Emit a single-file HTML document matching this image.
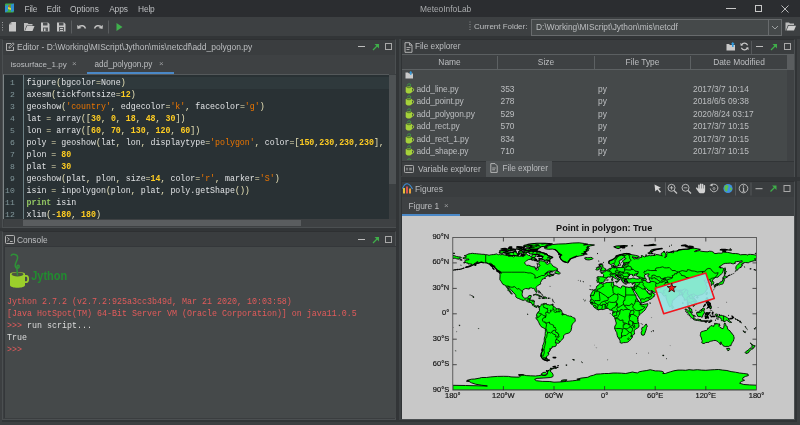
<!DOCTYPE html>
<html><head><meta charset="utf-8"><title>MeteoInfoLab</title>
<style>
*{box-sizing:border-box;margin:0;padding:0}
html,body{width:800px;height:425px;overflow:hidden;background:#3c3f41}
body{position:relative;font-family:"Liberation Sans",sans-serif;font-size:8.4px;color:#bcbec0;-webkit-font-smoothing:antialiased}
.a{position:absolute}
.t{position:absolute;white-space:pre;line-height:10px;height:10px}
.mono{font-family:"Liberation Mono",monospace}
.code{position:absolute;left:26.5px;white-space:pre;font-family:"Liberation Mono",monospace;font-size:8.28px;line-height:12px;height:12px;color:#e0e2e4}
.ln{position:absolute;left:0px;width:14.8px;text-align:right;font-family:"Liberation Mono",monospace;font-size:8.1px;line-height:12px;height:12px;color:#81969a}
.s{color:#ec7600}.n{color:#ffcd22;font-weight:bold}.p{color:#e8e2b7}.k{color:#93c763;font-weight:bold}
.con{position:absolute;left:7px;white-space:pre;font-family:"Liberation Mono",monospace;font-size:8.34px;line-height:12px;height:12px;color:#e25b5b}
.row{position:absolute;left:402px;width:385px;height:12.5px}
.row .t{top:1.2px}
#w{position:absolute;left:0;top:0;width:800px;height:425px;will-change:transform}
</style></head><body><div id="w">
<!-- menu bar -->
<div class="a" style="left:0;top:0;width:800px;height:17px;background:#2b2d30"></div>
<svg class="a" style="left:5px;top:3px" width="9" height="10" viewBox="0 0 9 10"><rect x="0" y="0.5" width="9" height="9" rx="1" fill="#3fae49"/><path d="M0 3 L3 1.5 L3 8 L0 9.5Z" fill="#2f8fd0"/><path d="M6 1.5 L9 0.5 L9 8 L6 9Z" fill="#2f8fd0"/><path d="M3 4 L6 5 L6 7 L3 6Z" fill="#e8d33c"/><circle cx="4.5" cy="3" r="1" fill="#d64a3a"/></svg>
<div class="t" style="left:24.6px;top:3.5px;letter-spacing:-0.25px">File</div>
<div class="t" style="left:46.6px;top:3.5px;letter-spacing:-0.15px">Edit</div>
<div class="t" style="left:70px;top:3.5px">Options</div>
<div class="t" style="left:109.2px;top:3.5px;letter-spacing:-0.15px">Apps</div>
<div class="t" style="left:138px;top:3.5px;letter-spacing:-0.15px">Help</div>
<div class="t" style="left:420px;top:3.5px;color:#a9abad">MeteoInfoLab</div>
<!-- window controls -->
<div class="a" style="left:725.5px;top:7.7px;width:10px;height:1px;background:#c8c8c8"></div>
<div class="a" style="left:754.5px;top:5px;width:7px;height:7px;border:1px solid #c8c8c8"></div>
<svg class="a" style="left:781px;top:4.5px" width="8" height="8" viewBox="0 0 8 8"><path d="M0.5 0.5L7.5 7.5M7.5 0.5L0.5 7.5" stroke="#c8c8c8" stroke-width="0.9"/></svg>
<!-- toolbar -->
<div class="a" style="left:0;top:17px;width:800px;height:19px;background:#3d4042"></div>
<div class="a" style="left:0;top:35.5px;width:800px;height:3.5px;background:#323537"></div>
<svg class="a" style="left:0;top:17px" width="130" height="19" viewBox="0 0 130 19">
 <g fill="#9a9c9e"><rect x="2" y="5" width="1" height="1"/><rect x="2" y="7.5" width="1" height="1"/><rect x="2" y="10" width="1" height="1"/><rect x="2" y="12.5" width="1" height="1"/></g>
 <path d="M9 14.5V7.5L11.5 5H16V14.5Z" fill="#c6c6c6"/><path d="M9 7.5H11.5V5Z" fill="#8e8e8e"/>
 <path d="M24 14V6H27.5L28.5 7H32.5V8.5H26.5L24.5 14Z" fill="#bdbdbd"/><path d="M25 14L27 9H34.5L32.5 14Z" fill="#c9c9c9"/>
 <path d="M41 5.5H48L49.5 7V14.5H41Z" fill="#c4c4c4"/><rect x="43" y="5.5" width="4.5" height="3" fill="#4a4d4f"/><rect x="43" y="10.5" width="5" height="4" fill="#55585a"/><rect x="44" y="11.5" width="1.5" height="2.5" fill="#c4c4c4"/>
 <path d="M57 5.5H64L65.5 7V14.5H57Z" fill="#c4c4c4"/><rect x="59" y="5.5" width="4.5" height="3" fill="#4a4d4f"/><rect x="59" y="10" width="5" height="4.5" fill="#55585a"/><rect x="60" y="11" width="3" height="1" fill="#c4c4c4"/><rect x="60" y="13" width="3" height="1" fill="#c4c4c4"/>
 <rect x="71" y="3.5" width="1" height="13" fill="#5a5d5f"/>
 <path d="M85.5 11.5C84.5 8.5 81.5 8 79 9.5" stroke="#c0c0c0" stroke-width="1.5" fill="none"/><path d="M77 8L77.5 12L81.5 11Z" fill="#c0c0c0"/>
 <path d="M94.5 11.5C95.5 8.5 98.5 8 101 9.5" stroke="#c0c0c0" stroke-width="1.5" fill="none"/><path d="M103 8L102.5 12L98.500 11Z" fill="#c0c0c0"/>
 <rect x="108" y="3.500" width="1" height="13" fill="#5a5d5f"/>
 <path d="M116.500 6L122.500 10L116.500 14Z" fill="#3fb04c"/>
</svg>
<!-- current folder -->
<svg class="a" style="left:469px;top:21px" width="2" height="12"><g fill="#8e9092"><rect x="0.500" y="0.500" width="1" height="1"/><rect x="0.500" y="3" width="1" height="1"/><rect x="0.500" y="5.500" width="1" height="1"/><rect x="0.500" y="8" width="1" height="1"/></g></svg>
<div class="t" style="left:474px;top:21.500px;font-size:8px;letter-spacing:-0.03px">Current Folder:</div>
<div class="a" style="left:531px;top:18.500px;width:250.500px;height:17px;background:#45494a;border:1px solid #686b6d"></div>
<div class="a" style="left:767.500px;top:19.500px;width:1px;height:15px;background:#686b6d"></div>
<svg class="a" style="left:770.500px;top:24.500px" width="8" height="5" viewBox="0 0 8 5"><path d="M1 1L4 4L7 1" stroke="#a8abad" stroke-width="0.9" fill="none"/></svg>
<div class="t" style="left:536px;top:22px">D:\Working\MIScript\Jython\mis\netcdf</div>
<svg class="a" style="left:784.500px;top:21px" width="12" height="11" viewBox="0 0 12 11"><path d="M0.500 9.500V1.500H4L5 2.500H9V4H3L0.900 9.500Z" fill="#bdbdbd"/><path d="M1.500 9.500L3.500 4.800H11L9 9.500Z" fill="#cfcfcf"/></svg>
<!-- vertical divider shading -->
<div class="a" style="left:396px;top:39px;width:2.500px;height:381px;background:#323537"></div>
<!-- ===== EDITOR PANEL ===== -->
<div class="a" style="left:2px;top:39px;width:394px;height:188.500px;background:#3a3d3f;border:1px solid #4b4f51;border-top-color:#2e3032"></div>
<div class="a" style="left:3px;top:55px;width:392px;height:19px;background:#3e4143"></div>
<svg class="a" style="left:4.500px;top:42px" width="10" height="10" viewBox="0 0 10 10"><path d="M6 1.500H1.500V8.500H8.500V5" stroke="#c0c0c0" stroke-width="0.9" fill="none"/><path d="M4 6.200L4.300 4.500L8 0.800L9.200 2L5.500 5.700Z" fill="none" stroke="#c0c0c0" stroke-width="0.800"/></svg>
<div class="t" style="left:17px;top:42px;font-size:8.47px">Editor - D:\Working\MIScript\Jython\mis\netcdf\add_polygon.py</div>
<div class="a" style="left:357.500px;top:46.200px;width:7px;height:1px;background:#bdbdbd"></div>
<svg class="a" style="left:371.500px;top:43px" width="8" height="8" viewBox="0 0 8 8"><path d="M1 7L6 2" stroke="#3fae49" stroke-width="1.300"/><path d="M2.500 1H7V5.500Z" fill="#3fae49"/></svg>
<div class="a" style="left:385px;top:43px;width:7px;height:7px;border:1px solid #a8a8a8"></div>
<div class="t" style="left:10.6px;top:59.5px;font-size:8px">isosurface_1.py</div>
<div class="t" style="left:72px;top:59px;font-size:8px;color:#9a9c9e">×</div>
<div class="t" style="left:94.5px;top:59.5px;font-size:8.2px">add_polygon.py</div>
<div class="t" style="left:159px;top:59px;font-size:8px;color:#9a9c9e">×</div>
<div class="a" style="left:87px;top:72px;width:87px;height:2px;background:#4a88c7"></div>
<!-- code area -->
<div class="a" style="left:2.8px;top:74px;width:386.2px;height:145px;background:#293134;border-left:1px solid #7d8486;border-top:1px solid #55595b"></div>
<div class="a" style="left:23px;top:76.500px;width:366px;height:12px;background:#2f393c"></div>
<div class="a" style="left:22.500px;top:75px;width:1px;height:144px;background:#6c7f83"></div>
<div class="a" style="left:389px;top:74px;width:6.5px;height:145px;background:#3b3f41"></div>
<div class="a" style="left:389px;top:74.5px;width:6.5px;height:109px;background:#4e5254"></div>
<div class="a" style="left:3.500px;top:219px;width:392px;height:7.500px;background:#3e4143"></div>
<div class="a" style="left:22.500px;top:219.500px;width:278px;height:6.500px;background:#5a5d5f"></div>
<div class="ln" style="top:76.5px">1</div><div class="code" style="top:76.5px">figure<span class="p">(</span>bgcolor<span class="p">=</span>None<span class="p">)</span></div>
<div class="ln" style="top:88.5px">2</div><div class="code" style="top:88.5px">axesm<span class="p">(</span>tickfontsize<span class="p">=</span><span class="n">12</span><span class="p">)</span></div>
<div class="ln" style="top:100.5px">3</div><div class="code" style="top:100.5px">geoshow<span class="p">(</span><span class="s">'country'</span><span class="p">,</span> edgecolor<span class="p">=</span><span class="s">'k'</span><span class="p">,</span> facecolor<span class="p">=</span><span class="s">'g'</span><span class="p">)</span></div>
<div class="ln" style="top:112.5px">4</div><div class="code" style="top:112.5px">lat <span class="p">=</span> array<span class="p">(</span><span class="p">[</span><span class="n">30</span><span class="p">,</span> <span class="n">0</span><span class="p">,</span> <span class="n">18</span><span class="p">,</span> <span class="n">48</span><span class="p">,</span> <span class="n">30</span><span class="p">]</span><span class="p">)</span></div>
<div class="ln" style="top:124.5px">5</div><div class="code" style="top:124.5px">lon <span class="p">=</span> array<span class="p">(</span><span class="p">[</span><span class="n">60</span><span class="p">,</span> <span class="n">70</span><span class="p">,</span> <span class="n">130</span><span class="p">,</span> <span class="n">120</span><span class="p">,</span> <span class="n">60</span><span class="p">]</span><span class="p">)</span></div>
<div class="ln" style="top:136.5px">6</div><div class="code" style="top:136.5px">poly <span class="p">=</span> geoshow<span class="p">(</span>lat<span class="p">,</span> lon<span class="p">,</span> displaytype<span class="p">=</span><span class="s">'polygon'</span><span class="p">,</span> color<span class="p">=</span><span class="p">[</span><span class="n">150</span><span class="p">,</span><span class="n">230</span><span class="p">,</span><span class="n">230</span><span class="p">,</span><span class="n">230</span><span class="p">]</span><span class="p">,</span></div>
<div class="ln" style="top:148.5px">7</div><div class="code" style="top:148.5px">plon <span class="p">=</span> <span class="n">80</span></div>
<div class="ln" style="top:160.5px">8</div><div class="code" style="top:160.5px">plat <span class="p">=</span> <span class="n">30</span></div>
<div class="ln" style="top:172.5px">9</div><div class="code" style="top:172.5px">geoshow<span class="p">(</span>plat<span class="p">,</span> plon<span class="p">,</span> size<span class="p">=</span><span class="n">14</span><span class="p">,</span> color<span class="p">=</span><span class="s">'r'</span><span class="p">,</span> marker<span class="p">=</span><span class="s">'S'</span><span class="p">)</span></div>
<div class="ln" style="top:184.5px">10</div><div class="code" style="top:184.5px">isin <span class="p">=</span> inpolygon<span class="p">(</span>plon<span class="p">,</span> plat<span class="p">,</span> poly.getShape<span class="p">(</span><span class="p">)</span><span class="p">)</span></div>
<div class="ln" style="top:196.5px">11</div><div class="code" style="top:196.5px"><span class="k">print</span> isin</div>
<div class="ln" style="top:208.5px">12</div><div class="code" style="top:208.5px">xlim<span class="p">(</span><span class="p">-</span><span class="n">180</span><span class="p">,</span> <span class="n">180</span><span class="p">)</span></div>
<!-- gap between editor and console -->
<div class="a" style="left:0;top:227.500px;width:398px;height:3.500px;background:#323537"></div>
<!-- ===== CONSOLE PANEL ===== -->
<div class="a" style="left:2px;top:231px;width:394px;height:188.500px;background:#3a3d3f;border:1px solid #4b4f51;border-top-color:#2e3032"></div>
<svg class="a" style="left:4.500px;top:234.500px" width="10" height="9" viewBox="0 0 10 9"><rect x="0.500" y="0.500" width="9" height="8" rx="1" fill="none" stroke="#c0c0c0" stroke-width="0.900"/><path d="M2.300 2.500L4.300 4.300L2.300 6.100" stroke="#c0c0c0" stroke-width="0.900" fill="none"/><path d="M5 6.500H7.700" stroke="#c0c0c0" stroke-width="0.900"/></svg>
<div class="t" style="left:17px;top:234.500px">Console</div>
<div class="a" style="left:357.500px;top:238.700px;width:7px;height:1px;background:#bdbdbd"></div>
<svg class="a" style="left:371.500px;top:235.500px" width="8" height="8" viewBox="0 0 8 8"><path d="M1 7L6 2" stroke="#3fae49" stroke-width="1.300"/><path d="M2.500 1H7V5.500Z" fill="#3fae49"/></svg>
<div class="a" style="left:385px;top:235.500px;width:7px;height:7px;border:1px solid #a8a8a8"></div>
<div class="a" style="left:3.5px;top:246px;width:392px;height:172px;background:#45494a;border-left:1px solid #34373a;border-top:1px solid #34373a"></div>
<!-- jython logo -->
<svg class="a" style="left:8px;top:251px" width="62" height="40" viewBox="0 0 62 40">
 <path d="M3.2 4.4C4.5 2.6 9.8 2.9 9.6 6.6C9.4 10 6.8 12 7.2 15.2C7.6 18 11.4 17.6 11.2 15.3C11 13.600 8.800 13.900 8.800 16.500C8.800 19 9.500 21 9.500 24" stroke="#2f9038" stroke-width="1.5" fill="none" stroke-linecap="round"/>
 <path d="M2 22.8C2 20.300 17 20.300 17 22.800V34.300C17 37.600 2 37.600 2 34.300Z" fill="#9bcf2b"/>
 <ellipse cx="9.500" cy="23.300" rx="6" ry="2.100" fill="#4c5342"/>
 <path d="M9.200 20.500C9.200 22 9.400 23 9.500 24.500" stroke="#2f9038" stroke-width="1.400" fill="none"/>
 <path d="M17 24.800H18.300C20.800 24.800 20.800 31.200 18.300 31.200H17" stroke="#9bcf2b" stroke-width="1.700" fill="none"/>
 <text x="23.200" y="28.700" font-family="Liberation Sans, sans-serif" font-weight="bold" font-size="13" fill="#228c30" textLength="36" lengthAdjust="spacingAndGlyphs">Jython</text>
</svg>
<div class="con" style="top:295.500px">Jython 2.7.2 (v2.7.2:925a3cc3b49d, Mar 21 2020, 10:03:58)</div>
<div class="con" style="top:307.500px">[Java HotSpot(TM) 64-Bit Server VM (Oracle Corporation)] on java11.0.5</div>
<div class="con" style="top:319.500px">&gt;&gt;&gt; <span style="color:#dcdcdc">run script...</span></div>
<div class="con" style="top:331.500px;color:#dcdcdc">True</div>
<div class="con" style="top:343.500px">&gt;&gt;&gt;</div>
<!-- ===== FILE EXPLORER PANEL ===== -->
<div class="a" style="left:400.500px;top:39px;width:394px;height:138px;background:#3a3d3f;border:1px solid #4b4f51;border-top-color:#2e3032;border-left-color:#303335"></div>
<svg class="a" style="left:403.500px;top:41.500px" width="9" height="11" viewBox="0 0 9 11"><path d="M1 0.700H5.500L8 3.200V10.300H1Z" fill="none" stroke="#c0c0c0" stroke-width="0.900"/><path d="M5.500 0.700V3.200H8" fill="none" stroke="#c0c0c0" stroke-width="0.800"/><path d="M2.500 5.500H6.500M2.500 7.500H5.500" stroke="#c0c0c0" stroke-width="0.800"/></svg>
<div class="t" style="left:415px;top:42px;font-size:8.250px">File explorer</div>
<!-- title icons -->
<svg class="a" style="left:725.500px;top:41.500px" width="10" height="9" viewBox="0 0 10 9"><path d="M0.500 8.500V2H3L4 3H9V8.500Z" fill="#c9c9c9"/><path d="M6.800 0L4.800 2.300H6V5H7.600V2.300H8.800Z" fill="#2f9be0"/></svg>
<svg class="a" style="left:739.500px;top:42px" width="9" height="9" viewBox="0 0 9 9"><path d="M7.600 3.300A3.300 3.300 0 0 0 1.600 2.800" stroke="#c9c9c9" stroke-width="1.200" fill="none"/><path d="M1.400 5.700A3.300 3.300 0 0 0 7.400 6.200" stroke="#c9c9c9" stroke-width="1.200" fill="none"/><path d="M0.300 1L0.800 4L3.500 3Z" fill="#c9c9c9"/><path d="M8.700 8L8.200 5L5.500 6Z" fill="#c9c9c9"/></svg>
<div class="a" style="left:751px;top:40.500px;width:1px;height:13px;background:#55585a"></div>
<div class="a" style="left:755.500px;top:46.200px;width:7px;height:1px;background:#bdbdbd"></div>
<svg class="a" style="left:769.500px;top:43px" width="8" height="8" viewBox="0 0 8 8"><path d="M1 7L6 2" stroke="#3fae49" stroke-width="1.300"/><path d="M2.500 1H7V5.500Z" fill="#3fae49"/></svg>
<div class="a" style="left:783.500px;top:43px;width:7px;height:7px;border:1px solid #a8a8a8"></div>
<!-- table -->
<div class="a" style="left:401.500px;top:54px;width:392.500px;height:106.500px;background:#45494a;border-top:1px solid #5b5f61"></div>
<div class="a" style="left:401.500px;top:55px;width:385.500px;height:14px;background:#3e4143"></div>
<div class="a" style="left:401.500px;top:69px;width:385.500px;height:1px;background:#5d6163"></div>
<div class="a" style="left:497px;top:56px;width:1px;height:12.500px;background:#5d6163"></div>
<div class="a" style="left:594px;top:56px;width:1px;height:12.500px;background:#5d6163"></div>
<div class="a" style="left:690px;top:56px;width:1px;height:12.500px;background:#5d6163"></div>
<div class="a" style="left:787px;top:55px;width:7px;height:105.500px;background:#3f4244"></div>
<div class="a" style="left:787px;top:54.500px;width:7px;height:15px;background:#5a5d5f"></div>
<div class="t" style="left:401.500px;width:96px;text-align:center;top:57px">Name</div>
<div class="t" style="left:498px;width:96px;text-align:center;top:57px">Size</div>
<div class="t" style="left:595px;width:95px;text-align:center;top:57px">File Type</div>
<div class="t" style="left:691px;width:96px;text-align:center;top:57px">Date Modified</div>
<svg class="a" style="left:405px;top:71px" width="9" height="8" viewBox="0 0 9 8"><path d="M0.500 7.500V1.500H3L4 2.500H8V7.500Z" fill="#c9c9c9"/><path d="M5.800 0L4.200 1.800H5.200V4H6.400V1.800H7.400Z" fill="#2f9be0"/></svg>
<div class="row" style="top:82.70px"><svg class="a" style="left:2.5px;top:0.2px" width="10" height="11" viewBox="0 0 10 11"><path d="M2.3 2.400C2.500 0.400 6 0.400 5.800 2C5.600 3.200 3.600 3 4 4.400" stroke="#3c9c46" stroke-width="1" fill="none"/><path d="M0.700 4.200C0.700 3.300 7 3.300 7 4.200V8.300C7 9.700 6 10.400 4.800 10.400H2.900C1.700 10.400 0.700 9.700 0.700 8.300Z" fill="#a5d13a"/><ellipse cx="3.850" cy="4.500" rx="2.500" ry="0.700" fill="#5f8a28"/><path d="M7 5.400H7.700C9 5.400 9 8.200 7.700 8.200H7" stroke="#a5d13a" stroke-width="1" fill="none"/></svg><div class="t" style="left:14.5px;letter-spacing:-0.06px">add_line.py</div><div class="t" style="left:98.5px">353</div><div class="t" style="left:196px">py</div><div class="t" style="left:291px">2017/3/7 10:14</div></div>
<div class="row" style="top:95.15px"><svg class="a" style="left:2.5px;top:0.2px" width="10" height="11" viewBox="0 0 10 11"><path d="M2.3 2.400C2.500 0.400 6 0.400 5.800 2C5.600 3.200 3.600 3 4 4.400" stroke="#3c9c46" stroke-width="1" fill="none"/><path d="M0.700 4.200C0.700 3.300 7 3.300 7 4.200V8.300C7 9.700 6 10.400 4.800 10.400H2.900C1.700 10.400 0.700 9.700 0.700 8.300Z" fill="#a5d13a"/><ellipse cx="3.850" cy="4.500" rx="2.500" ry="0.700" fill="#5f8a28"/><path d="M7 5.400H7.700C9 5.400 9 8.200 7.700 8.200H7" stroke="#a5d13a" stroke-width="1" fill="none"/></svg><div class="t" style="left:14.5px;letter-spacing:-0.06px">add_point.py</div><div class="t" style="left:98.5px">278</div><div class="t" style="left:196px">py</div><div class="t" style="left:291px">2018/6/5 09:38</div></div>
<div class="row" style="top:107.60px"><svg class="a" style="left:2.5px;top:0.2px" width="10" height="11" viewBox="0 0 10 11"><path d="M2.3 2.400C2.500 0.400 6 0.400 5.800 2C5.600 3.200 3.600 3 4 4.400" stroke="#3c9c46" stroke-width="1" fill="none"/><path d="M0.700 4.200C0.700 3.300 7 3.300 7 4.200V8.300C7 9.700 6 10.400 4.800 10.400H2.900C1.700 10.400 0.700 9.700 0.700 8.300Z" fill="#a5d13a"/><ellipse cx="3.850" cy="4.500" rx="2.500" ry="0.700" fill="#5f8a28"/><path d="M7 5.400H7.700C9 5.400 9 8.200 7.700 8.200H7" stroke="#a5d13a" stroke-width="1" fill="none"/></svg><div class="t" style="left:14.5px;letter-spacing:-0.06px">add_polygon.py</div><div class="t" style="left:98.5px">529</div><div class="t" style="left:196px">py</div><div class="t" style="left:291px">2020/8/24 03:17</div></div>
<div class="row" style="top:120.05px"><svg class="a" style="left:2.5px;top:0.2px" width="10" height="11" viewBox="0 0 10 11"><path d="M2.3 2.400C2.500 0.400 6 0.400 5.800 2C5.600 3.200 3.600 3 4 4.400" stroke="#3c9c46" stroke-width="1" fill="none"/><path d="M0.700 4.200C0.700 3.300 7 3.300 7 4.200V8.300C7 9.700 6 10.400 4.800 10.400H2.900C1.700 10.400 0.700 9.700 0.700 8.300Z" fill="#a5d13a"/><ellipse cx="3.850" cy="4.500" rx="2.500" ry="0.700" fill="#5f8a28"/><path d="M7 5.400H7.700C9 5.400 9 8.200 7.700 8.200H7" stroke="#a5d13a" stroke-width="1" fill="none"/></svg><div class="t" style="left:14.5px;letter-spacing:-0.06px">add_rect.py</div><div class="t" style="left:98.5px">570</div><div class="t" style="left:196px">py</div><div class="t" style="left:291px">2017/3/7 10:15</div></div>
<div class="row" style="top:132.50px"><svg class="a" style="left:2.5px;top:0.2px" width="10" height="11" viewBox="0 0 10 11"><path d="M2.3 2.400C2.500 0.400 6 0.400 5.800 2C5.600 3.200 3.600 3 4 4.400" stroke="#3c9c46" stroke-width="1" fill="none"/><path d="M0.700 4.200C0.700 3.300 7 3.300 7 4.200V8.300C7 9.700 6 10.400 4.800 10.400H2.900C1.700 10.400 0.700 9.700 0.700 8.300Z" fill="#a5d13a"/><ellipse cx="3.850" cy="4.500" rx="2.500" ry="0.700" fill="#5f8a28"/><path d="M7 5.400H7.700C9 5.400 9 8.200 7.700 8.200H7" stroke="#a5d13a" stroke-width="1" fill="none"/></svg><div class="t" style="left:14.5px;letter-spacing:-0.06px">add_rect_1.py</div><div class="t" style="left:98.5px">834</div><div class="t" style="left:196px">py</div><div class="t" style="left:291px">2017/3/7 10:15</div></div>
<div class="row" style="top:144.95px"><svg class="a" style="left:2.5px;top:0.2px" width="10" height="11" viewBox="0 0 10 11"><path d="M2.3 2.400C2.500 0.400 6 0.400 5.800 2C5.600 3.200 3.600 3 4 4.400" stroke="#3c9c46" stroke-width="1" fill="none"/><path d="M0.700 4.200C0.700 3.300 7 3.300 7 4.200V8.300C7 9.700 6 10.400 4.800 10.400H2.900C1.700 10.400 0.700 9.700 0.700 8.300Z" fill="#a5d13a"/><ellipse cx="3.850" cy="4.500" rx="2.500" ry="0.700" fill="#5f8a28"/><path d="M7 5.400H7.700C9 5.400 9 8.200 7.700 8.200H7" stroke="#a5d13a" stroke-width="1" fill="none"/></svg><div class="t" style="left:14.5px;letter-spacing:-0.06px">add_shape.py</div><div class="t" style="left:98.5px">710</div><div class="t" style="left:196px">py</div><div class="t" style="left:291px">2017/3/7 10:15</div></div>
<div class="a" style="left:402px;top:157.40px;width:14px;height:3.10px;overflow:hidden"><svg class="a" style="left:2.5px;top:0.2px" width="10" height="11" viewBox="0 0 10 11"><path d="M2.3 2.400C2.500 0.400 6 0.400 5.800 2C5.600 3.200 3.600 3 4 4.400" stroke="#3c9c46" stroke-width="1" fill="none"/><path d="M0.700 4.200C0.700 3.300 7 3.300 7 4.200V8.300C7 9.700 6 10.400 4.800 10.400H2.900C1.700 10.400 0.700 9.700 0.700 8.300Z" fill="#a5d13a"/><ellipse cx="3.850" cy="4.500" rx="2.500" ry="0.700" fill="#5f8a28"/><path d="M7 5.400H7.700C9 5.400 9 8.200 7.700 8.200H7" stroke="#a5d13a" stroke-width="1" fill="none"/></svg></div>
<!-- bottom tabs of explorer -->
<div class="a" style="left:401.500px;top:160.500px;width:392.500px;height:16px;background:#3c3f41;border-top:1px solid #323537"></div>
<div class="a" style="left:486px;top:161px;width:66px;height:15.500px;background:#4e5254"></div>
<svg class="a" style="left:404px;top:164.500px" width="10" height="8" viewBox="0 0 10 8"><rect x="0.500" y="0.500" width="9" height="7" rx="0.800" fill="none" stroke="#b4b4b4" stroke-width="0.900"/><path d="M2.200 3.300H3.800M2.200 4.800H3.800M5.200 3.300H7.800M5.200 4.800H7.800" stroke="#b4b4b4" stroke-width="0.800"/></svg>
<div class="t" style="left:418px;top:164px">Variable explorer</div>
<svg class="a" style="left:489.500px;top:163px" width="8" height="10" viewBox="0 0 8 10"><path d="M0.800 0.600H5L7.200 2.800V9.400H0.800Z" fill="none" stroke="#c0c0c0" stroke-width="0.900"/><path d="M2.200 5H5.800M2.200 6.800H5" stroke="#c0c0c0" stroke-width="0.800"/></svg>
<div class="t" style="left:502.500px;top:164px;font-size:8.250px">File explorer</div>
<!-- gap -->
<div class="a" style="left:398.500px;top:177px;width:401.500px;height:3.500px;background:#323537"></div>
<!-- ===== FIGURES PANEL ===== -->
<div class="a" style="left:400.500px;top:180.500px;width:394px;height:239px;background:#3a3d3f;border:1px solid #4b4f51;border-top-color:#2e3032;border-left-color:#303335"></div>
<div class="a" style="left:401.500px;top:197px;width:392.500px;height:19px;background:#3e4143"></div>
<svg class="a" style="left:402px;top:183px" width="11" height="11" viewBox="0 0 11 11"><rect x="1" y="5" width="2" height="5.500" fill="#e8c03a"/><rect x="4" y="3.500" width="2" height="7" fill="#d9534f"/><rect x="7" y="5.500" width="2" height="5" fill="#e8a03a"/><path d="M0.500 5.500C3 -1 7 -1 10.500 6" stroke="#3f8fd8" stroke-width="1.100" fill="none"/></svg>
<div class="t" style="left:415px;top:184px">Figures</div>
<div class="t" style="left:408.500px;top:201px">Figure 1</div>
<div class="t" style="left:444px;top:200.500px;font-size:8px;color:#9a9c9e">×</div>
<div class="a" style="left:401.500px;top:214px;width:58px;height:2px;background:#4a88c7"></div>
<!-- figures toolbar icons -->
<svg class="a" style="left:650px;top:181px" width="145" height="16" viewBox="0 0 145 16">
 <path d="M4.500 3.500L5.300 10.500L7.200 8.600L9.800 11.800L11 10.800L8.400 7.700L10.900 6.800Z" fill="#d6d6d6"/>
 <rect x="15" y="1.500" width="1" height="13" fill="#55585a"/>
 <g fill="none" stroke="#c4c4c4" stroke-width="0.900"><circle cx="21.500" cy="6.800" r="3.500"/><path d="M24 9.500L27 12.500" stroke-width="1.200"/><path d="M19.700 6.800H23.300M21.500 5V8.600" stroke-width="0.800"/>
 <circle cx="35.500" cy="6.800" r="3.500"/><path d="M38 9.500L41 12.500" stroke-width="1.200"/><path d="M33.700 6.800H37.300" stroke-width="0.800"/></g>
 <g fill="#d2d2d2"><rect x="48.2" y="3.4" width="1.5" height="6" rx="0.7"/><rect x="50" y="2.4" width="1.5" height="6.500" rx="0.7"/><rect x="51.800" y="2.800" width="1.500" height="6" rx="0.700"/><rect x="53.600" y="4" width="1.500" height="5" rx="0.700"/><path d="M48.200 7.500H55.100V10C55.100 11.500 54 12.300 52.800 12.300H50.800C49.800 12.300 49 11.800 48.400 10.800L46 7.400C45.600 6.600 46.600 6 47.200 6.700L48.200 8Z"/></g>
 <g fill="none" stroke="#c4c4c4" stroke-width="0.900"><path d="M62 3.800A3.800 3.800 0 1 1 60.300 7.500"/><circle cx="64" cy="7.500" r="1" stroke-width="0.700"/></g><path d="M59.500 4.300L62.500 2.200V5.500Z" fill="#c4c4c4"/>
 <circle cx="78" cy="7.500" r="4.600" fill="#3f8fe0"/><path d="M75 4.500C76.500 3.500 78 4 78.500 5C79 6.500 77 7 77.500 8.500C78 10 76.500 11 75.500 10C74.500 9 74 6 75 4.500Z" fill="#5fc04a"/><path d="M80 6.500C81.500 6 82.300 7.500 81.500 9C81 10 80 9.500 80 8.500Z" fill="#5fc04a"/>
 <rect x="85" y="1.500" width="1" height="13" fill="#55585a"/>
 <circle cx="93.500" cy="7.500" r="4.300" fill="none" stroke="#c4c4c4" stroke-width="0.900"/><path d="M93.600 6.900V10.200M92.600 10.300H94.600M92.700 6.900H93.600" stroke="#c4c4c4" stroke-width="1" fill="none"/><circle cx="93.500" cy="5" r="0.700" fill="#c4c4c4"/>
 <rect x="100.500" y="1.500" width="1" height="13" fill="#55585a"/>
 <rect x="105.500" y="7.200" width="7" height="1" fill="#bdbdbd"/>
 <path d="M120.500 10.500L125.500 5.500" stroke="#3fae49" stroke-width="1.300"/><path d="M122 4.500H126.500V9Z" fill="#3fae49"/>
 <rect x="134" y="4.500" width="6" height="6" fill="none" stroke="#a8a8a8" stroke-width="1"/>
</svg>
<!-- figure canvas -->
<div class="a" style="left:401.500px;top:216px;width:392.500px;height:203px;background:#c8c8c8"></div>
<!-- shadow-r -->
<div class="a" style="left:794.5px;top:39px;width:2px;height:382px;background:#313436"></div>
<div class="a" style="left:2px;top:419.5px;width:794.5px;height:2px;background:#313436"></div>
<div class="a" style="left:398.5px;top:39px;width:2px;height:381px;background:#3e4244"></div>
<svg class="a" style="left:401.0px;top:216.0px" width="393.0" height="203.0" viewBox="0 0 393.0 203.0">
<defs><clipPath id="ax"><rect x="52.10" y="21.80" width="303.05" height="151.85"/></clipPath></defs>
<g clip-path="url(#ax)" stroke-linejoin="round"><g transform="translate(0,-0.1)">
<path d="M61.8 42.1L63.4 41.7L64.9 41.4L65.5 40.9L64.0 40.1L63.2 39.8L64.9 39.4L66.1 38.8L67.0 38.2L69.5 37.7L71.5 37.4L73.3 37.7L75.4 37.8L77.1 38.0L78.8 38.1L80.9 38.4L83.0 38.4L84.7 38.8L86.4 38.9L88.1 39.4L89.3 39.0L90.6 38.8L92.3 38.7L94.0 38.4L95.7 38.0L96.7 38.6L97.8 39.0L98.4 38.4L99.5 38.9L101.1 38.6L103.3 39.0L104.9 39.4L106.6 39.6L107.0 40.2L109.2 40.4L110.8 40.2L112.1 40.7L112.5 41.2L113.4 40.6L113.0 40.0L114.6 39.7L116.7 40.2L118.4 40.4L120.5 40.3L121.8 40.7L122.7 40.7L123.1 39.7L124.6 38.9L122.7 38.3L122.4 37.4L123.9 36.8L124.8 37.4L126.0 38.2L126.4 38.9L127.5 39.5L129.0 39.6L129.6 40.6L130.7 40.5L131.3 39.0L132.4 38.5L134.2 38.6L135.1 39.1L134.9 40.0L134.5 41.0L133.2 41.5L132.4 41.6L130.9 41.4L131.3 42.2L130.0 42.5L129.4 43.4L127.7 43.6L126.9 44.1L125.6 44.8L124.6 45.7L123.7 46.7L123.9 47.6L124.2 48.0L125.4 49.1L125.8 49.5L127.3 49.3L129.0 49.9L130.2 50.4L131.9 50.9L134.0 51.0L134.3 52.0L134.3 52.9L135.1 53.5L135.7 54.3L136.6 54.3L137.2 53.7L137.2 52.9L136.8 51.9L136.4 51.3L137.8 50.9L138.9 50.1L138.9 49.1L138.3 48.4L137.4 48.0L138.3 47.1L137.8 46.1L137.8 44.9L139.5 44.9L141.2 45.0L142.9 45.5L144.2 46.1L145.0 46.3L144.9 47.1L145.3 47.9L146.3 48.4L147.5 48.1L148.1 47.3L149.1 46.6L149.6 47.4L150.7 48.4L151.5 49.2L151.8 50.1L152.8 50.8L154.3 51.3L155.3 52.0L156.4 52.6L156.6 53.4L156.0 54.1L154.3 54.4L153.0 55.2L151.3 55.2L149.6 55.2L147.5 55.2L146.9 55.9L145.6 56.5L144.6 57.4L143.7 58.0L144.6 57.8L145.8 56.8L147.5 56.2L149.2 56.2L149.4 56.7L148.1 57.0L148.8 57.8L149.0 58.5L149.9 58.9L150.9 59.1L152.2 59.1L152.2 59.5L150.5 59.9L149.2 60.5L148.2 60.9L147.8 60.3L148.8 59.6L149.2 59.2L148.1 59.5L147.1 59.6L146.0 60.2L144.6 60.8L144.0 61.5L144.1 62.2L144.6 62.4L143.9 62.5L142.5 62.9L141.2 63.3L141.2 64.2L140.4 64.8L140.1 65.6L139.5 66.4L139.5 67.3L139.9 67.9L138.9 68.4L137.8 69.1L136.8 69.7L135.5 70.7L135.0 71.9L135.6 73.6L136.1 75.1L135.9 76.4L135.1 76.4L134.6 75.6L133.9 74.3L133.8 73.2L132.9 72.4L131.7 72.6L130.7 72.0L129.4 72.1L128.1 72.2L128.4 73.1L127.3 73.1L126.0 72.7L124.3 72.7L123.3 73.2L122.1 73.9L121.5 74.9L121.6 75.9L121.2 77.5L121.1 78.9L121.6 80.3L122.4 81.4L123.1 81.9L123.9 82.4L125.2 82.1L126.2 82.0L127.1 81.4L127.4 80.2L128.1 79.7L129.0 79.6L130.2 79.6L130.4 80.2L129.8 81.3L129.6 82.4L129.1 83.0L129.1 83.8L128.6 84.3L129.8 84.4L131.1 84.3L132.4 84.4L133.4 85.1L133.2 86.4L133.1 87.6L133.0 88.5L133.6 89.3L134.3 90.0L135.1 90.3L136.1 90.0L137.0 89.7L138.0 90.3L138.4 90.5L137.9 91.7L137.6 90.8L136.6 90.3L135.9 90.8L135.9 91.6L134.9 91.3L133.8 90.8L133.1 90.6L132.1 89.5L131.3 89.2L131.3 88.4L130.5 87.5L129.8 86.8L129.0 86.6L127.7 86.2L126.4 85.8L125.8 85.4L124.5 84.2L123.5 84.1L122.2 84.5L120.5 83.9L119.3 83.4L117.8 82.7L116.3 82.2L115.1 81.3L114.6 80.4L114.8 79.5L114.2 78.5L113.0 77.1L111.7 76.1L111.3 75.1L110.4 74.5L109.6 73.6L108.7 72.5L108.1 71.3L106.8 70.8L106.9 71.9L107.9 73.2L108.6 74.2L109.6 75.6L110.3 76.8L111.3 78.1L110.8 78.4L110.2 77.6L109.0 76.8L109.0 75.8L107.9 75.1L106.6 74.2L107.3 73.7L106.6 72.8L106.0 71.9L105.2 71.0L104.9 70.2L103.8 69.1L102.0 68.6L100.8 66.8L100.3 65.8L99.2 64.3L98.8 63.5L98.9 62.2L99.0 60.1L99.0 58.6L98.4 56.8L99.9 56.9L100.3 57.5L100.0 56.3L98.6 55.4L96.9 54.7L96.1 54.1L95.7 53.3L94.4 52.4L93.7 51.6L93.1 50.7L92.3 49.9L91.0 49.1L89.3 48.2L87.6 48.0L85.8 47.2L83.9 46.9L81.7 46.8L80.1 46.3L78.4 46.9L77.1 47.5L75.6 47.5L75.8 46.5L77.1 45.9L75.0 46.5L74.2 47.4L73.3 48.2L72.0 49.1L70.4 49.9L68.7 50.6L66.6 51.2L64.6 51.5L66.1 50.9L67.4 50.3L68.7 49.8L69.9 49.1L70.8 48.1L69.7 48.1L68.2 48.0L67.0 48.1L67.0 47.1L65.3 47.0L64.0 46.3L64.0 45.5L63.6 45.2L64.6 44.6L64.9 44.2L66.6 44.0L67.8 43.9L67.8 43.1L66.3 43.2L64.5 43.1L63.2 42.9L61.8 42.1ZM166.5 47.0L164.8 46.3L162.7 45.9L161.5 44.8L160.2 43.5L159.3 42.3L158.3 41.0L158.9 39.7L160.6 38.9L157.7 38.3L158.1 37.4L156.8 36.3L156.0 35.1L154.3 33.8L151.3 33.2L147.5 33.4L144.6 32.9L143.3 32.1L146.3 31.4L142.9 31.2L147.1 30.1L148.8 29.6L151.3 28.7L157.2 28.1L164.8 27.9L171.6 27.1L178.3 26.9L183.4 27.6L186.8 28.3L182.5 29.0L190.1 28.7L193.5 29.1L189.3 30.0L187.6 30.8L187.6 32.1L188.4 32.9L186.8 33.8L187.6 34.6L185.1 35.5L183.4 36.3L185.1 36.9L185.1 38.0L181.7 38.2L183.4 38.9L181.3 39.6L178.3 40.1L175.8 40.7L173.3 41.8L171.6 42.1L169.9 42.7L169.5 44.0L168.2 44.8L167.8 46.1L167.4 46.8ZM138.4 90.5L138.8 91.0L139.4 90.2L139.9 89.7L139.9 88.8L140.5 88.4L141.6 88.2L142.7 87.6L143.3 87.3L143.5 87.8L143.0 88.4L143.2 88.6L143.7 88.5L144.4 88.1L144.6 87.5L144.8 88.1L145.9 88.3L146.1 88.8L147.8 88.8L148.8 89.2L149.4 89.0L150.5 88.7L151.4 88.7L150.9 89.2L152.2 89.7L152.3 90.5L153.2 90.8L154.3 91.7L155.4 92.7L156.6 92.8L158.1 92.9L159.1 93.3L160.0 94.0L160.6 94.5L161.0 96.3L161.5 97.1L161.2 97.8L162.7 98.0L163.1 98.4L164.4 98.6L165.8 99.2L166.3 99.9L167.1 99.8L168.6 100.3L169.9 100.3L171.2 100.9L172.2 101.9L173.7 102.1L174.1 103.3L174.3 104.2L174.1 105.4L172.8 106.7L172.0 107.5L171.2 108.8L170.7 110.1L170.7 111.8L170.3 113.1L170.1 114.5L169.1 116.0L168.4 116.9L167.4 117.3L165.9 117.6L164.6 118.1L163.3 119.0L162.6 119.8L162.6 121.1L162.5 122.0L161.5 123.2L160.6 124.3L159.6 125.1L158.6 126.4L158.1 127.0L157.2 127.4L156.2 127.4L155.1 127.0L154.4 126.6L154.3 127.1L155.4 127.9L155.4 128.6L154.9 130.2L153.9 130.6L152.2 130.9L151.2 130.7L151.1 132.1L149.8 132.7L148.8 132.6L148.8 133.7L149.9 133.8L148.8 134.4L148.4 136.0L146.9 136.6L146.7 137.2L148.0 137.8L148.0 138.5L146.7 139.8L145.6 140.4L145.4 141.5L145.9 142.1L145.0 142.1L143.9 142.7L143.5 143.5L142.5 143.2L141.6 142.7L140.8 142.1L140.2 141.0L139.9 139.8L139.9 138.5L140.8 137.6L139.9 137.4L140.8 136.4L141.6 135.5L142.1 134.3L142.2 133.4L141.4 133.2L141.4 131.7L141.8 130.9L141.5 129.6L142.1 128.9L142.4 127.9L143.1 126.2L143.3 124.9L143.2 123.5L143.4 122.2L143.8 120.9L144.2 119.4L144.2 117.7L144.4 115.6L144.3 113.5L143.5 112.6L142.5 112.0L141.2 111.4L139.9 110.5L139.3 109.5L138.5 108.1L137.8 106.7L137.2 105.4L136.5 104.2L135.7 103.1L135.1 102.9L135.1 101.6L135.7 100.8L136.3 99.9L135.4 99.7L135.5 98.6L136.1 97.8L136.1 97.1L137.0 96.8L137.2 96.3L137.4 95.7L138.3 95.4L138.5 94.5L138.3 93.1L138.3 92.2L137.9 91.7ZM153.6 57.4L155.1 57.5L156.8 58.0L158.5 58.2L159.1 57.5L158.8 56.6L158.1 55.9L156.6 55.6L156.4 54.8L156.7 54.1L155.5 54.6L155.0 55.4L154.3 56.3L153.6 57.4ZM149.2 55.5L150.9 56.2L151.6 56.1L150.5 55.6L149.2 55.5ZM149.4 58.1L150.9 58.8L151.3 58.5L150.1 58.3L149.4 58.1ZM151.8 59.1L153.0 59.1L153.0 58.5L152.5 58.0L151.8 58.6L151.8 59.1ZM62.5 46.8L63.9 47.1L63.8 46.7L62.5 46.8ZM58.8 43.9L61.1 44.2L61.2 44.1L59.8 43.8L58.8 43.9ZM64.5 51.5L65.7 51.5L65.7 51.2L64.5 51.3ZM61.9 52.5L63.4 52.2L63.2 52.0L61.9 52.4ZM60.9 53.0L61.9 52.6L61.8 52.4L60.9 52.9ZM132.0 79.2L132.8 79.1L133.8 78.6L134.6 78.2L135.7 78.2L136.7 78.8L138.0 79.2L139.1 79.8L139.9 80.3L141.0 80.7L140.4 80.9L138.3 80.9L138.5 80.3L137.4 80.0L136.6 79.4L135.3 79.1L134.5 78.8L133.2 79.0L132.0 79.2ZM140.9 82.3L142.1 82.4L143.1 82.7L143.7 82.4L144.6 82.3L145.8 82.4L145.8 81.9L145.0 81.4L144.2 81.0L143.1 81.0L142.1 80.9L141.8 81.2L142.3 81.6L142.5 82.0L140.9 82.0L140.9 82.3ZM137.6 82.3L138.7 82.7L139.4 82.5L138.7 82.1L137.6 82.2ZM146.9 82.2L147.0 82.5L148.1 82.5L148.3 82.2L146.9 82.1ZM151.4 89.2L152.2 89.2L152.2 88.6L151.6 88.7ZM137.7 76.5L138.1 77.3L138.2 76.6L137.7 76.5ZM137.2 75.2L138.0 75.2L138.7 75.4L138.6 75.8L137.8 75.2ZM160.8 98.1L162.1 98.0L162.7 98.5L161.9 99.2L160.8 98.6L160.8 98.1ZM126.4 98.1L127.0 98.2L126.7 98.6L126.4 98.1ZM72.0 80.7L72.9 81.0L72.9 81.4L72.3 81.7L72.0 81.2ZM71.5 80.0L72.0 80.3L71.7 80.3ZM70.2 79.5L70.6 79.7L70.3 79.7ZM68.8 79.1L69.3 79.1L69.0 79.2ZM171.6 143.6L173.3 143.8L173.3 144.3L172.0 143.9ZM198.6 67.4L199.2 67.4L201.1 67.9L201.9 68.0L203.6 67.4L204.9 66.9L206.2 66.5L207.8 66.6L210.0 66.3L211.9 66.2L212.9 66.3L212.5 66.9L212.6 67.7L212.9 68.6L212.1 68.8L212.9 69.4L213.3 69.7L214.6 69.9L216.4 70.3L216.7 71.1L218.4 71.6L219.7 72.1L220.5 71.5L220.5 70.5L221.8 69.9L223.0 70.2L224.7 71.0L226.8 71.3L228.1 71.6L229.8 71.1L230.9 71.3L231.1 72.5L231.2 73.2L231.9 74.2L232.3 75.2L233.1 76.8L233.6 77.6L234.0 78.7L234.7 79.1L235.0 80.0L235.1 81.3L235.3 81.9L236.1 82.5L236.7 84.2L237.1 84.9L237.8 85.3L238.6 86.4L239.5 86.9L240.1 87.2L240.1 88.0L240.7 88.9L242.0 88.8L243.3 88.3L245.0 88.2L246.7 87.7L246.8 88.9L246.5 89.8L245.8 91.0L245.0 92.3L244.1 94.0L242.4 95.7L241.2 96.5L239.9 97.8L239.1 98.6L238.2 99.5L237.5 100.1L236.9 101.6L236.5 102.9L236.9 103.7L236.8 105.0L237.2 106.3L237.8 107.0L237.8 108.4L238.0 110.1L237.6 111.4L236.5 112.2L234.8 113.1L234.0 113.9L233.1 114.8L233.4 116.5L233.6 118.1L231.9 119.2L231.3 119.8L231.4 121.1L230.9 122.2L229.9 123.1L229.2 124.1L227.9 125.4L226.8 126.2L225.6 126.5L224.3 126.7L222.6 126.7L220.5 127.3L219.5 126.9L219.1 126.9L219.1 125.5L219.0 124.7L218.2 123.2L217.5 122.0L216.7 121.1L216.3 119.8L215.9 118.1L215.9 116.9L215.0 115.6L214.2 113.9L213.6 112.6L213.6 111.4L214.0 110.1L215.0 108.4L215.3 107.1L214.8 105.9L214.6 105.0L214.0 103.0L213.9 102.5L213.6 101.6L212.9 100.9L211.9 99.9L211.4 99.1L211.1 98.4L211.6 97.4L211.6 96.5L211.9 95.7L211.8 94.7L211.1 94.0L210.0 94.1L208.7 94.2L207.8 92.9L207.4 92.5L205.7 92.5L204.5 92.8L202.8 93.4L201.9 93.7L200.7 93.5L199.0 93.5L197.3 94.1L196.0 93.4L194.5 92.4L193.1 91.4L192.5 90.6L192.4 89.7L191.4 88.9L191.0 88.5L189.5 87.3L189.5 86.4L188.9 85.3L189.7 84.2L190.1 82.5L189.9 81.5L189.3 80.0L189.7 78.9L190.3 77.6L191.1 76.2L191.5 75.5L192.5 74.3L193.9 73.8L195.2 72.8L195.4 71.9L195.4 71.1L196.0 70.1L197.3 69.3L198.1 68.6L198.6 67.4ZM231.1 72.5L231.6 73.6L232.5 74.2L233.0 72.8L233.1 74.1L234.4 75.8L235.1 77.0L236.1 78.3L236.7 79.6L237.8 81.3L238.6 82.5L239.5 83.8L239.9 85.5L240.3 87.0L241.6 86.9L243.3 86.4L245.0 85.5L247.5 84.7L248.3 83.7L250.0 83.2L251.3 82.1L252.4 81.3L252.5 80.4L254.1 78.7L253.1 77.8L251.7 77.3L251.2 75.5L250.9 76.4L250.3 76.4L249.2 77.3L247.5 77.5L247.1 76.9L247.1 75.9L246.6 75.7L246.5 76.6L246.0 76.0L245.8 75.2L245.0 74.4L244.5 73.6L244.1 72.8L244.5 72.4L245.4 72.3L246.2 73.0L246.6 74.1L247.9 74.7L249.2 75.2L250.4 74.9L251.3 74.8L251.9 75.9L253.2 76.3L254.7 76.4L255.6 76.5L257.2 76.4L258.9 76.4L259.9 76.6L260.4 77.2L261.0 77.7L261.7 78.3L261.8 78.9L262.7 80.0L263.5 80.2L264.5 79.7L264.8 79.0L265.0 80.4L265.0 81.7L265.5 83.4L265.9 84.7L266.5 85.9L266.8 87.0L267.6 88.3L268.0 89.7L268.6 90.8L269.1 90.9L269.6 90.3L270.3 89.9L270.9 89.1L270.9 87.8L271.4 86.6L271.2 84.9L271.9 84.4L273.0 83.7L274.1 82.7L275.3 81.4L276.6 80.7L277.0 79.7L278.0 79.4L278.7 79.3L280.0 78.9L281.1 78.9L281.5 80.2L282.1 81.0L283.1 81.9L283.3 83.1L283.2 84.2L284.0 84.4L285.0 83.8L285.6 83.6L286.0 84.7L286.3 85.9L286.8 87.6L286.8 89.3L286.5 90.2L286.5 91.0L287.1 91.9L288.0 92.4L288.3 93.6L288.6 94.6L289.2 95.4L290.1 96.1L290.9 96.7L291.5 96.6L290.9 95.4L290.8 94.4L290.5 93.1L289.7 92.5L288.8 92.0L288.2 91.4L288.0 90.2L287.4 89.9L287.3 88.9L287.8 87.8L288.0 86.5L288.8 86.5L288.8 87.1L289.9 87.5L290.5 88.5L291.8 88.9L292.2 90.2L292.0 90.5L293.5 89.7L293.9 89.0L295.4 88.2L295.8 87.2L295.7 85.9L295.4 84.7L294.3 83.6L293.5 82.5L292.8 81.5L293.5 80.6L293.9 80.0L294.7 79.5L295.6 79.5L296.2 79.6L296.4 80.5L296.8 79.8L297.7 79.6L298.9 79.1L299.9 78.9L301.0 78.6L302.3 77.9L303.6 76.9L304.6 76.0L304.7 75.1L305.5 74.1L306.4 73.0L306.5 72.4L305.7 71.9L306.4 71.3L305.7 70.4L305.1 69.0L304.3 68.1L305.1 67.2L307.0 66.4L305.7 65.9L304.0 66.2L303.2 65.4L303.0 64.7L304.0 64.5L305.7 63.2L306.5 63.5L305.9 64.7L307.4 64.2L308.5 63.9L309.3 64.3L309.1 65.2L309.5 65.8L310.4 66.3L310.2 67.3L310.2 68.6L311.2 68.4L312.4 68.0L312.9 66.9L312.2 65.6L311.2 64.3L312.0 63.5L313.1 62.8L313.8 61.9L315.0 61.2L316.2 61.5L317.9 60.5L319.2 59.2L320.4 58.0L322.0 56.4L322.1 55.0L322.8 53.3L322.7 52.6L321.7 52.0L320.0 51.9L319.2 52.2L319.6 51.3L317.9 51.3L319.2 50.3L320.9 49.2L322.6 48.0L324.2 47.5L326.8 47.4L329.3 47.2L331.4 47.8L332.3 47.9L334.4 47.4L333.9 46.1L335.6 45.7L338.6 45.4L341.1 44.8L341.1 46.1L338.6 46.5L338.4 47.4L336.9 48.4L335.8 49.5L335.0 50.7L334.8 52.4L335.2 53.7L335.8 54.6L336.9 53.7L337.4 52.9L338.6 52.0L340.3 51.3L340.1 50.3L341.1 50.2L341.4 48.8L340.3 48.6L341.5 47.4L342.8 46.9L344.5 46.6L347.3 46.9L348.7 46.1L350.8 45.4L353.3 44.8L354.9 44.8L354.6 43.5L353.3 43.1L354.2 42.9L355.5 42.7L355.5 39.3L353.8 39.0L352.1 38.7L349.5 38.5L347.4 38.5L347.0 39.3L345.3 38.7L342.0 38.7L339.4 38.9L337.7 38.0L334.4 37.6L331.8 37.7L330.1 37.2L326.8 36.5L322.6 36.2L320.9 37.2L319.2 37.3L317.5 37.2L315.0 37.6L313.3 37.6L312.9 36.6L310.7 35.5L308.2 35.3L307.0 35.9L304.0 35.8L299.8 35.3L298.9 34.6L296.4 35.1L294.7 35.7L293.5 35.7L293.9 35.1L298.1 33.8L299.4 33.5L296.4 32.8L293.9 32.5L291.6 31.9L288.8 32.9L287.1 33.4L284.6 33.3L281.2 33.6L277.0 34.2L276.2 35.1L273.6 35.3L271.5 35.5L272.8 36.8L271.5 36.8L269.4 36.5L267.7 36.8L266.9 36.1L265.0 36.1L266.0 37.6L265.6 39.3L265.9 40.2L264.4 41.7L263.5 41.4L264.8 40.6L264.8 39.3L264.9 37.6L262.7 35.9L261.4 36.8L260.1 37.6L260.1 38.9L261.4 39.9L259.3 39.5L258.0 39.0L255.1 38.6L254.2 39.6L251.7 39.6L249.6 39.9L248.8 39.5L245.8 40.2L243.3 41.0L241.2 39.7L240.3 39.6L240.9 41.4L239.1 41.5L237.4 42.9L234.8 42.7L233.0 43.2L232.7 42.3L231.0 41.0L233.1 41.4L235.7 41.8L238.2 41.2L237.8 40.3L234.8 39.5L231.9 39.0L229.8 38.6L228.9 38.1L227.2 37.6L225.3 37.5L223.0 38.0L220.5 38.6L218.4 39.5L216.7 40.2L215.6 41.2L214.2 42.3L212.9 43.1L211.6 44.0L210.0 44.6L208.3 45.2L207.8 46.5L208.3 47.8L209.1 48.5L210.4 48.5L211.6 47.8L212.5 47.5L213.1 47.8L213.3 48.6L214.2 49.9L214.4 50.7L215.6 50.7L216.3 50.2L217.5 49.5L217.8 48.2L219.2 47.4L218.2 46.3L218.1 45.2L219.2 44.4L220.9 43.5L221.8 42.7L222.4 42.0L223.9 42.0L225.0 42.7L224.3 43.4L222.6 44.2L221.6 44.8L221.8 46.1L222.2 46.6L223.0 47.0L224.7 46.8L226.8 46.5L228.5 46.9L227.2 47.3L225.6 47.3L224.3 47.4L223.4 47.6L223.4 48.4L224.2 48.4L224.0 49.3L223.0 49.4L222.6 48.9L221.8 49.1L221.3 49.9L221.3 50.9L220.5 51.3L220.1 51.7L219.3 51.6L218.0 51.4L215.9 52.0L215.0 51.6L213.7 51.9L212.9 52.0L212.1 51.7L211.9 51.2L212.5 50.3L212.5 49.1L211.6 49.4L210.5 49.6L210.5 50.7L210.9 51.3L211.0 52.0L210.8 52.4L209.5 52.4L208.3 52.6L207.6 53.0L207.0 53.7L206.5 54.2L205.7 54.5L205.0 54.7L204.8 55.3L203.8 55.8L202.6 55.9L202.4 55.7L202.4 56.5L201.1 56.4L199.7 56.7L200.0 57.3L201.5 57.6L201.9 58.1L202.6 58.8L202.6 60.1L202.2 61.0L200.7 60.9L198.6 60.8L196.9 60.8L195.9 61.3L196.2 62.2L196.2 63.5L195.7 64.9L196.2 65.6L196.1 66.4L197.3 66.3L198.2 66.5L198.6 67.1L199.1 67.2L199.8 66.7L201.8 66.6L203.0 65.9L203.6 65.0L203.4 64.3L204.3 63.2L205.5 62.7L206.3 62.0L206.2 61.3L207.2 60.9L208.1 61.1L209.2 61.2L210.0 60.7L211.0 60.2L212.2 60.6L212.5 61.4L213.6 62.2L214.2 62.6L215.3 62.9L215.7 63.3L216.9 63.9L217.1 64.7L216.9 65.6L217.5 65.3L218.0 64.7L217.6 64.1L218.0 63.5L219.1 63.9L218.8 63.3L217.1 62.6L217.1 62.3L216.3 62.2L215.4 61.5L215.0 60.8L214.1 60.3L214.0 59.4L215.1 59.1L215.1 59.7L216.1 59.6L216.4 60.3L217.5 60.9L218.4 61.3L219.2 61.9L220.0 62.4L220.0 63.5L220.5 64.1L221.3 65.1L221.6 65.8L221.9 66.6L222.6 66.9L223.1 66.9L222.9 66.0L223.4 65.8L224.0 65.8L223.9 65.2L223.0 64.7L222.9 63.9L223.4 63.7L223.9 63.9L224.3 63.2L225.6 63.2L225.7 63.8L225.7 64.4L226.2 65.1L226.6 66.0L226.7 66.4L227.4 66.7L228.5 67.1L229.4 66.6L230.6 67.1L231.9 67.2L233.0 66.6L234.0 66.7L233.9 67.7L233.9 68.6L233.6 69.1L233.1 70.0L232.7 71.1L231.9 71.4L230.9 71.3ZM51.8 42.7L53.1 42.3L54.8 42.4L55.6 42.9L57.7 43.3L58.3 43.2L58.1 42.4L59.8 42.2L60.5 41.8L59.4 41.1L57.3 40.9L55.6 40.6L53.5 39.8L51.8 39.3ZM198.8 55.3L200.7 55.2L202.4 54.8L204.5 54.6L204.9 54.3L204.3 54.1L205.1 53.2L203.9 52.9L203.6 52.4L202.5 51.4L201.9 50.5L201.1 50.3L201.9 49.5L201.9 48.9L200.3 48.9L200.9 48.1L199.4 48.1L198.7 49.1L198.4 49.9L199.0 50.7L199.6 51.3L200.8 51.3L201.1 52.2L200.9 52.6L199.8 52.6L200.1 53.3L199.2 53.9L200.7 54.2L199.8 54.6L198.8 55.3ZM195.2 54.1L196.5 54.1L198.3 53.5L198.6 52.6L199.0 51.6L198.3 51.0L196.7 51.0L196.5 51.8L195.2 51.9L195.6 52.6L194.9 53.5L195.2 54.1ZM183.4 42.3L185.1 43.2L184.6 43.6L186.8 44.0L188.4 44.0L191.0 43.3L192.1 42.7L191.1 41.7L189.7 41.5L188.0 41.8L186.3 41.8L184.6 41.5L183.4 42.3ZM354.2 37.6L355.5 37.7L355.5 37.2L354.6 37.2ZM51.8 37.7L53.5 37.6L53.9 37.4L51.8 37.2ZM244.4 39.3L245.4 39.6L245.8 39.1L245.0 38.9ZM323.4 58.8L324.7 58.1L324.2 56.3L325.5 56.0L324.5 54.6L324.5 52.9L324.0 51.8L323.4 52.4L323.2 53.7L323.6 55.4L323.4 57.1L323.4 58.8ZM321.7 62.6L322.6 62.4L324.5 62.2L326.4 61.1L325.5 60.5L324.2 60.3L323.4 59.3L323.1 60.1L322.8 61.1L322.0 61.3L321.7 62.0L321.7 62.6ZM314.0 69.0L315.1 68.2L316.2 67.7L317.9 67.6L318.9 66.8L319.4 66.0L320.4 66.2L321.3 65.2L321.7 63.9L322.0 62.9L323.0 62.8L323.4 64.1L323.0 65.3L322.6 66.4L322.3 67.5L321.5 68.1L320.6 68.4L319.2 68.5L318.8 68.8L318.2 69.4L317.7 68.7L316.7 68.5L315.4 68.7L314.5 69.0L314.0 69.0ZM313.0 69.7L314.0 69.1L314.7 69.4L314.8 70.2L314.1 71.3L313.4 71.3L313.4 70.2L313.0 69.7ZM315.2 69.4L316.2 68.8L317.2 68.9L316.8 69.5L315.8 70.0L315.2 69.4ZM311.3 75.7L311.8 75.2L311.6 75.5ZM326.8 60.1L328.9 59.4L328.5 59.1L327.0 59.8ZM329.7 59.0L330.6 58.6L330.3 58.5ZM334.4 55.2L335.2 54.8L334.8 54.7ZM341.5 48.1L342.4 47.8L342.0 47.6ZM305.0 78.3L305.5 79.1L306.1 77.9L306.4 76.6L305.7 76.5L305.0 77.6ZM295.3 81.4L296.0 82.4L296.8 81.9L297.3 81.1L296.4 80.8L295.3 81.4ZM270.9 90.6L270.9 91.9L271.3 92.7L272.1 92.5L272.7 91.6L272.1 90.5L271.4 89.6L270.9 90.6ZM295.6 96.5L296.1 96.1L297.4 96.5L297.7 95.7L298.9 95.1L299.8 94.0L301.0 93.4L302.1 92.0L302.9 92.4L304.0 93.3L303.2 94.0L302.9 94.8L303.2 95.9L304.0 97.0L303.0 97.1L302.7 98.2L301.9 99.1L301.7 100.3L301.5 101.2L300.4 101.3L299.4 100.6L297.9 100.8L296.6 100.3L296.4 99.1L295.6 98.2L295.6 97.4L295.6 96.5ZM284.0 93.1L285.9 93.4L286.5 94.2L288.0 95.4L288.8 96.0L290.1 97.0L291.1 97.8L290.9 98.6L291.8 99.3L293.0 100.3L292.9 102.7L291.8 102.7L290.5 101.9L289.7 101.0L288.8 100.1L288.2 98.6L287.1 97.5L286.7 96.3L285.9 95.7L285.0 94.7L284.2 93.7L284.0 93.1ZM292.4 103.6L293.2 102.9L294.7 103.2L295.4 103.6L296.8 103.3L297.3 103.3L298.7 103.7L300.2 104.4L300.1 105.2L298.5 104.9L296.4 104.6L294.7 104.4L293.5 104.1L292.4 103.6ZM314.1 98.5L315.4 98.1L316.7 98.5L316.8 99.9L317.5 100.6L318.8 99.7L320.0 99.2L321.7 99.8L323.0 100.1L324.2 100.7L325.5 101.1L326.6 102.3L328.0 102.9L328.3 103.6L327.4 103.7L328.5 104.6L329.7 105.9L330.7 106.5L329.7 106.6L328.3 106.3L326.8 105.0L325.5 104.3L324.7 104.8L324.2 105.6L323.0 105.5L321.7 104.8L320.4 104.8L320.0 103.7L320.6 103.3L320.0 102.5L318.8 101.8L317.5 101.5L316.2 101.1L315.6 101.3L315.6 100.5L315.0 100.2L316.2 99.8L315.1 99.7L314.1 99.0L314.1 98.5ZM334.0 102.4L334.8 103.1L335.1 103.6L334.5 103.4ZM336.1 104.0L337.3 104.4L338.4 105.0L337.7 104.8L336.3 104.3ZM338.3 105.7L339.3 106.2L338.8 106.1ZM339.2 104.9L339.7 105.9L339.4 105.9ZM342.0 114.8L343.2 115.6L344.5 116.7L343.9 116.7L342.6 115.9L342.0 114.8ZM344.2 110.5L344.7 111.1L344.3 111.0ZM344.7 111.4L345.2 111.8L344.8 111.8ZM353.2 112.7L354.3 112.8L354.2 113.2L353.3 113.1ZM354.4 111.8L355.5 111.5L355.0 112.0ZM299.5 116.9L299.9 116.3L301.0 115.6L302.3 115.3L304.0 114.8L305.7 114.4L306.8 113.2L306.7 112.2L307.8 112.5L308.0 111.5L309.1 110.8L309.9 109.8L311.2 109.8L311.9 110.4L312.9 110.4L312.9 109.2L313.7 108.5L314.1 108.1L315.4 108.1L315.5 107.5L316.2 107.8L317.7 108.1L318.9 108.1L318.3 109.0L317.9 110.3L318.9 111.3L320.0 112.0L321.1 112.6L322.1 112.7L322.7 111.5L323.1 109.8L323.1 108.5L323.6 107.1L323.9 106.9L324.7 108.4L324.8 109.8L325.8 110.1L326.3 110.9L326.4 112.0L326.9 113.6L328.0 114.3L329.1 115.0L329.7 116.5L330.8 117.0L331.0 118.0L332.5 119.2L332.8 120.7L333.2 122.1L332.7 123.9L332.3 125.2L331.4 126.2L330.8 127.5L330.1 128.9L330.1 129.7L328.7 129.9L327.2 130.9L326.1 130.3L324.8 130.7L323.1 130.3L322.0 129.8L321.5 128.8L321.0 128.1L320.2 128.1L320.4 127.3L319.9 125.9L319.6 126.8L319.2 127.6L318.3 127.3L317.7 126.6L316.8 125.7L315.4 124.9L314.1 124.5L312.4 124.7L310.7 125.2L309.5 125.4L308.2 125.9L307.8 126.5L306.1 126.5L304.7 126.7L303.2 127.6L301.9 127.5L300.8 126.9L300.6 126.2L301.2 125.4L301.2 124.5L300.6 123.5L300.5 122.2L299.9 120.9L299.3 119.8L299.4 118.8L299.5 117.7L299.5 116.9ZM325.7 132.3L327.0 132.6L328.6 132.4L328.7 133.6L328.0 134.5L326.8 134.8L326.2 133.8L325.7 132.3ZM318.8 128.1L319.9 128.1L320.0 128.2L319.0 128.3ZM313.4 107.5L314.4 107.4L314.3 107.8L313.5 107.8ZM318.7 109.5L319.1 109.6L318.9 109.9ZM349.3 127.0L350.4 127.7L351.1 129.0L351.9 128.8L352.2 129.7L353.8 129.7L354.2 129.8L353.6 131.0L352.9 131.3L352.8 132.1L351.5 133.1L351.1 132.8L351.4 131.9L350.4 131.3L351.0 130.6L351.0 129.6L350.6 128.7L349.5 127.6L349.3 127.0ZM349.3 132.1L350.2 132.5L350.6 133.2L349.5 134.4L349.1 134.9L348.1 135.4L347.9 136.4L347.0 137.1L345.8 137.3L344.5 137.0L344.1 136.5L345.3 135.3L347.0 134.4L348.1 133.4L348.9 132.4L349.3 132.1ZM344.9 137.5L345.5 137.6L345.2 137.9ZM245.2 108.0L246.0 109.7L246.2 110.9L245.6 111.4L245.4 112.6L244.8 114.8L243.9 117.3L243.3 119.0L242.0 119.4L240.7 119.0L240.1 116.9L241.0 114.8L240.7 113.1L241.0 111.6L242.4 111.2L243.5 110.3L244.1 109.2L245.2 108.0ZM248.6 87.1L249.6 87.2L249.2 87.4ZM236.7 102.7L236.9 103.1L236.8 103.2ZM252.0 114.8L252.4 115.0L252.1 115.2ZM240.1 107.5L240.3 107.9L240.1 107.8ZM210.8 94.7L211.1 94.8L210.9 95.1ZM189.4 73.8L190.0 73.6L189.7 74.1ZM191.4 74.0L192.0 73.5L191.9 73.9ZM183.6 84.9L183.9 85.2L183.6 85.2ZM214.2 65.6L215.0 65.4L216.7 65.4L216.4 66.4L215.7 66.4L214.4 65.9L214.2 65.6ZM210.5 63.1L211.5 62.9L211.8 63.6L211.6 64.6L210.8 64.7L210.7 63.9L210.5 63.1ZM210.9 61.9L211.6 61.3L211.6 62.2L211.4 62.7L211.0 62.4L210.9 61.9ZM223.5 67.7L224.3 67.8L225.8 68.0L225.1 68.2L223.6 68.0ZM230.9 68.1L231.5 67.9L232.7 67.6L232.2 68.1L231.5 68.5L230.9 68.1ZM205.6 64.2L206.3 64.0L206.4 64.4L206.0 64.5ZM223.2 64.8L224.0 65.2L224.3 65.6L223.5 65.2ZM227.1 67.1L227.4 66.9L227.3 67.3ZM225.6 64.6L226.1 64.5L225.9 64.7ZM213.1 50.9L214.2 50.9L214.2 50.3L213.3 50.4ZM211.9 51.0L212.7 51.0L212.6 50.7L212.0 50.7ZM219.0 49.5L219.7 49.1L219.5 48.7L219.1 49.1ZM217.5 50.2L218.0 49.2L217.7 49.8ZM222.1 48.4L223.0 48.4L223.0 48.1L222.2 48.2ZM222.4 48.0L223.0 48.0L222.7 47.7ZM220.2 46.8L220.7 46.8L220.5 46.6ZM197.5 45.2L198.1 45.2L197.9 45.0ZM202.4 46.9L202.8 46.6L202.5 46.4ZM197.6 48.8L198.4 48.3L197.9 48.7ZM214.6 40.2L216.3 39.9L216.7 39.4L215.4 39.7ZM261.7 139.3L262.9 139.4L262.8 139.8L261.8 139.8ZM281.8 86.4L282.1 87.2L281.8 88.0L281.6 87.2ZM282.7 91.6L282.8 92.0L282.7 92.0ZM292.4 99.3L293.2 99.2L293.5 100.3L292.9 100.0ZM294.4 100.1L294.9 100.1L294.7 100.5ZM285.6 96.6L286.1 97.1L285.9 97.2ZM286.9 98.6L287.3 99.2L287.1 99.2ZM310.1 69.6L310.7 69.4L310.4 69.7ZM312.6 68.7L312.9 68.4L312.7 68.8ZM320.3 65.6L320.4 65.3L320.2 65.7ZM51.8 174.1L51.8 169.4L64.5 169.6L77.1 169.9L86.4 170.1L80.5 169.3L74.6 168.3L70.4 166.9L66.1 164.4L70.4 163.3L73.7 163.1L78.8 162.2L80.5 161.6L85.5 161.6L89.8 161.0L96.5 160.5L102.4 160.4L107.5 160.5L110.0 161.0L115.1 161.2L118.4 161.2L119.3 160.1L117.6 159.0L121.8 158.8L125.2 159.7L129.4 159.9L134.5 160.1L137.8 159.7L140.4 159.3L144.6 159.5L146.3 158.4L146.7 157.1L146.4 155.9L147.7 154.6L148.8 153.8L150.2 153.0L152.2 152.2L154.7 151.5L155.3 151.8L153.2 152.4L151.3 153.2L150.2 154.0L149.0 155.1L150.5 156.3L151.8 158.0L152.2 159.7L151.8 160.8L149.6 161.6L142.9 162.1L136.1 162.5L133.6 163.5L135.3 164.8L141.2 165.5L148.8 165.6L153.0 166.3L159.8 166.0L165.7 165.5L171.6 164.9L175.8 164.4L179.2 163.9L175.8 163.3L180.0 162.2L186.8 161.4L189.3 160.1L192.7 159.3L195.2 158.2L199.4 158.0L203.6 157.6L207.8 157.6L212.1 157.1L216.3 157.1L220.5 157.3L224.7 157.6L228.9 156.7L231.5 156.1L234.0 156.7L236.5 157.0L238.2 155.9L241.6 155.2L245.8 154.6L249.2 153.8L251.7 154.4L254.2 155.0L257.6 155.0L261.0 155.4L262.7 156.3L261.8 157.6L264.4 157.6L266.0 157.0L269.4 155.9L272.8 154.9L277.0 154.2L281.2 154.2L284.6 154.4L288.0 153.8L292.2 154.2L296.4 153.8L300.6 154.2L304.8 154.4L309.1 154.0L313.3 153.8L317.5 153.6L321.7 154.2L325.9 154.6L330.1 155.7L334.4 156.3L338.6 157.1L342.8 157.6L347.0 158.2L347.4 159.7L344.5 160.5L342.0 161.8L341.5 163.5L343.6 164.4L340.3 165.6L338.6 167.3L342.8 168.6L348.7 169.0L355.5 169.3L355.5 174.1ZM136.1 50.3L136.8 50.3L136.6 49.7ZM136.6 49.2L137.0 49.1L136.7 48.7ZM135.9 47.5L136.4 47.5L136.1 47.0ZM134.6 52.9L135.9 53.0L135.7 52.6ZM136.1 48.3L136.6 48.4L136.4 48.0ZM138.4 44.1L139.1 44.1L138.8 43.8ZM157.4 38.9L159.8 39.0L159.5 38.3L157.7 38.3ZM343.4 50.9L344.0 51.3L343.7 51.3ZM59.8 49.3L60.2 49.3L60.1 49.5ZM151.5 84.0L152.0 84.0L151.8 84.3ZM151.8 84.6L152.0 84.7L151.8 84.9ZM152.0 85.3L152.3 85.4L152.2 85.6ZM152.1 85.9L152.3 86.1L152.2 86.2ZM153.3 86.5L153.5 86.7L153.4 86.8ZM151.3 83.2L151.6 83.3L151.4 83.4ZM148.8 82.2L149.2 82.2L149.1 82.4ZM151.5 87.5L151.7 87.5L151.6 87.6ZM145.3 87.3L145.7 87.5L145.5 87.6ZM139.5 77.0L140.1 77.4L139.9 77.3ZM140.2 77.8L140.5 78.2L140.4 78.2ZM141.5 79.8L142.1 79.9L141.8 80.1ZM138.8 76.3L139.4 76.5L139.3 76.8ZM140.8 78.5L141.3 78.7L141.0 78.9ZM148.9 70.3L149.1 70.3L149.1 70.5ZM181.9 65.7L182.5 65.8L182.1 65.8ZM179.4 65.1L180.0 65.2L179.7 65.2ZM177.2 64.3L177.4 64.4L177.3 64.5ZM189.0 69.9L189.5 70.0L189.3 70.2ZM188.4 73.4L188.7 73.5L188.6 73.6ZM190.3 73.9L190.6 74.0L190.5 74.2ZM182.3 83.3L182.6 83.4L182.5 83.5ZM184.2 84.1L184.5 84.2L184.3 84.3ZM209.1 97.5L209.4 97.5L209.2 97.8ZM164.8 149.2L166.1 149.2L165.5 149.3ZM181.0 146.7L181.4 146.8L181.3 147.1ZM180.6 145.8L180.9 145.9L180.7 146.0ZM206.3 143.9L206.6 143.9L206.5 144.0ZM195.2 132.0L195.4 132.0L195.3 132.1ZM193.2 129.3L193.3 129.3L193.3 129.3ZM159.8 165.5L164.0 164.9L166.1 164.1L163.6 163.8L160.6 164.4ZM139.9 158.4L142.1 156.6L144.6 156.3L145.6 157.6L145.0 159.1L142.5 159.5ZM117.6 158.9L121.8 158.8L122.7 159.2L119.3 159.3ZM65.3 165.2L68.2 164.8L67.8 165.6ZM265.5 142.7L265.9 142.8L265.6 142.9ZM247.1 137.1L247.4 137.1L247.2 137.2ZM235.3 137.5L235.6 137.6L235.4 137.6ZM269.0 129.8L269.1 129.8L269.0 129.9ZM252.0 114.8L252.4 115.0L252.1 115.2ZM250.3 115.6L250.7 115.7L250.4 115.9ZM250.4 101.7L250.5 101.8L250.4 101.9ZM265.5 94.2L265.7 94.3L265.6 94.5ZM241.0 108.1L241.2 108.2L241.1 108.3ZM241.7 108.6L241.8 108.7L241.7 108.8ZM325.6 86.4L325.8 86.4L325.8 86.5ZM57.9 109.2L58.4 109.3L58.1 109.5ZM58.5 109.6L59.1 109.6L58.8 109.8ZM55.8 115.7L56.0 115.8L55.8 115.9ZM77.4 112.7L77.8 112.7L77.6 113.0ZM345.4 112.7L345.8 112.8L345.6 113.0ZM346.3 113.7L346.5 113.9L346.2 113.9ZM344.6 115.4L344.8 115.7L344.5 115.7ZM51.8 111.5L52.0 111.7L51.8 111.9ZM54.5 134.9L54.9 134.9L54.8 135.2ZM317.1 91.4L317.2 91.5L317.1 91.6ZM327.3 99.5L328.0 99.5L327.6 99.7ZM335.6 103.4L336.5 103.9L336.1 103.9ZM339.7 106.5L340.5 106.9L340.1 107.0ZM316.8 102.5L317.3 102.9L316.9 103.6L316.7 103.1ZM314.3 104.1L314.7 103.9L314.5 104.6ZM315.7 102.4L315.9 102.8L315.6 102.8ZM309.7 104.2L310.6 104.2L310.3 104.5ZM308.5 104.8L309.1 104.8L308.7 104.9ZM308.6 99.2L309.9 99.3L309.3 99.5ZM311.1 99.0L311.6 99.1L311.3 99.2ZM317.9 98.4L318.6 98.6L318.2 98.8ZM317.9 99.2L319.0 99.2L318.3 99.4ZM310.4 94.1L310.7 94.4L310.5 94.5ZM309.4 94.7L309.6 94.9L309.4 95.0ZM306.4 92.2L306.8 92.2L306.5 92.4ZM305.6 92.7L305.9 92.7L305.8 92.9ZM307.7 89.3L308.4 89.2L308.6 89.6L308.0 89.7ZM307.5 87.2L308.1 87.5L307.8 87.6ZM306.4 81.4L306.5 81.6L306.4 81.7ZM294.7 94.4L295.1 94.6L294.9 94.7ZM284.4 95.4L284.9 95.7L284.8 95.8ZM289.8 102.3L290.0 102.4L289.9 102.5ZM298.7 103.6L299.8 103.6L299.7 103.9L298.8 103.9ZM307.1 101.6L307.5 101.9L307.3 102.5L307.0 102.3ZM312.7 73.9L313.0 73.6L312.9 73.9ZM308.3 77.1L308.5 77.0L308.4 77.2ZM313.6 72.1L313.9 72.0L313.7 72.2ZM319.4 51.2L320.2 51.1L319.9 51.4ZM332.5 57.8L332.8 57.5L332.7 57.8ZM331.7 58.1L332.0 57.9L331.8 58.1ZM333.9 56.0L334.3 55.8L334.1 56.0ZM326.4 60.7L326.9 60.2L326.7 60.6ZM328.9 32.8L329.7 32.9L329.3 32.9ZM262.2 35.7L263.9 35.8L263.5 35.5ZM253.0 38.6L254.4 38.2L253.8 38.0L253.1 38.3ZM270.3 29.3L270.9 29.3L270.6 29.2ZM268.2 30.4L268.8 30.4L268.5 30.3ZM230.6 29.9L231.7 29.9L231.1 29.7ZM196.0 37.7L196.9 37.5L196.5 37.7ZM219.5 34.7L219.9 34.6L219.7 34.8ZM200.8 47.8L201.3 47.8L201.1 48.0ZM199.7 51.9L199.9 51.8L199.8 51.9ZM216.0 51.0L216.4 51.1L216.2 51.2ZM212.9 51.3L213.7 51.4L213.3 51.5ZM214.8 51.6L215.2 51.7L214.9 51.8ZM204.7 64.7L205.0 64.7L204.9 64.8ZM206.8 63.9L207.3 64.0L207.0 64.1ZM212.1 61.5L212.4 61.5L212.3 61.6ZM215.7 67.4L215.9 67.4L215.9 67.4ZM220.2 64.1L220.4 64.3L220.6 64.4ZM220.8 65.3L221.2 65.4L221.0 65.5ZM225.5 65.2L225.7 65.3L225.6 65.4ZM226.1 65.8L226.4 65.8L226.2 65.9ZM225.0 66.3L225.2 66.4L225.0 66.5ZM226.3 66.5L226.7 66.6L226.4 66.7ZM226.5 67.4L226.6 67.7L226.5 67.8ZM224.7 64.0L225.0 64.0L224.9 64.1ZM224.3 63.3L224.5 63.3L224.5 63.4ZM222.9 67.0L223.1 67.1L223.0 67.2ZM212.7 69.1L212.9 69.1L212.8 69.2ZM246.1 75.6L246.3 75.7L246.2 75.8ZM250.3 75.2L251.0 75.0L250.8 75.2ZM253.1 80.3L253.3 80.6L253.1 80.7ZM237.4 84.4L237.6 84.5L237.4 84.6ZM237.1 102.0L237.2 102.3L237.0 102.3ZM237.1 104.4L237.3 104.5L237.1 104.6Z" fill="#00ff00" stroke="#000" stroke-width="0.9"/>
<path d="M151.8 41.4L150.9 42.1L149.6 42.7L148.8 43.1L149.2 44.1L148.0 44.5L146.3 44.8L147.5 45.3L145.8 45.1L143.7 44.6L142.9 44.0L141.2 43.4L138.7 43.3L137.8 42.7L140.8 42.4L141.6 41.6L142.1 40.6L140.8 40.0L139.1 39.6L137.8 38.7L136.1 38.6L134.5 38.5L131.9 38.4L130.2 38.1L128.6 37.9L128.1 37.2L127.7 36.3L128.6 35.5L131.1 35.2L131.9 35.7L134.0 35.3L135.3 35.7L135.7 36.3L137.8 36.1L139.5 36.1L140.8 36.8L142.9 37.1L143.7 37.8L145.4 38.0L146.3 38.8L146.7 39.5L149.2 40.3L150.5 40.8L151.8 41.4ZM104.9 38.5L106.6 39.0L107.9 39.6L110.8 39.6L114.2 39.6L115.5 39.9L117.6 39.4L118.0 38.7L116.3 38.2L118.4 38.3L118.4 37.6L115.9 37.4L115.1 36.3L113.4 35.7L111.7 36.2L112.5 36.9L110.0 36.2L107.5 35.9L106.6 35.6L104.1 36.3L103.3 37.0L104.9 37.4L106.6 37.3L108.3 37.9L107.5 38.3L104.9 38.5ZM98.2 36.8L99.9 37.4L102.0 37.2L102.4 36.5L104.1 36.1L106.2 35.5L104.5 34.8L101.6 34.6L98.6 34.9L99.0 35.9L98.2 36.8ZM104.9 34.0L107.5 34.5L110.0 34.6L112.5 34.3L114.6 34.2L114.2 33.5L111.7 33.0L110.0 33.2L107.9 32.9L105.8 33.3L104.9 34.0ZM99.9 33.2L103.3 33.5L105.8 32.9L104.1 32.3L101.6 32.7L99.9 33.2ZM115.9 32.9L118.9 34.2L121.0 34.2L121.4 33.4L120.5 32.8L118.0 32.7L115.9 32.9ZM117.6 36.8L120.1 37.4L122.2 36.8L122.2 36.0L121.0 35.1L118.9 35.1L117.6 35.9L117.6 36.8ZM123.1 36.7L124.8 36.8L127.7 36.1L127.7 35.1L125.2 34.9L123.1 35.2L123.1 36.7ZM122.2 34.0L126.0 34.5L129.4 34.6L132.8 34.6L136.1 34.6L136.6 33.8L133.6 33.5L129.4 33.6L128.6 32.9L125.2 32.9L122.2 32.7L122.2 34.0ZM127.7 33.1L132.8 33.1L137.0 33.1L137.8 32.5L139.5 31.5L139.9 30.8L143.7 30.3L147.1 29.3L151.3 28.0L148.0 27.6L142.9 27.3L136.1 27.3L130.2 27.9L126.9 28.5L127.7 29.4L131.1 29.7L129.4 30.6L131.1 31.4L128.6 32.0L127.7 33.1ZM122.7 30.1L125.6 31.2L129.4 31.4L130.2 30.4L128.6 29.6L126.0 28.9L123.5 29.3L122.7 30.1ZM115.5 31.2L119.3 31.8L122.2 31.8L121.0 31.0L116.7 30.6L115.5 31.2ZM119.7 39.2L121.4 39.7L123.1 39.5L122.7 38.6L120.5 38.5L119.7 39.2ZM129.8 43.5L131.5 44.2L133.6 43.8L135.3 44.0L135.7 43.5L134.5 42.9L133.2 41.9L131.5 41.8L130.7 42.9L129.8 43.5ZM133.6 44.7L134.9 44.9L136.1 44.6L134.5 44.3L133.6 44.7ZM135.7 35.9L137.8 36.1L139.5 36.0L138.3 35.3L135.7 35.3L135.7 35.9ZM136.1 40.6L138.7 40.7L139.5 40.0L137.4 39.8L136.1 40.6ZM95.4 54.8L96.9 55.9L98.2 56.5L99.5 56.9L99.3 56.3L98.2 55.4L96.5 54.7L95.4 54.8ZM91.4 51.9L92.3 52.9L93.1 53.6L92.5 52.3L91.4 51.9ZM73.3 49.1L74.6 49.5L75.2 48.8L74.6 48.5L73.3 49.1ZM88.9 48.8L90.2 50.1L91.4 51.0L92.3 50.6L91.0 49.5L89.8 48.6L88.9 48.8ZM145.8 142.4L146.1 143.2L147.5 144.0L148.6 144.2L147.5 144.5L145.8 144.7L144.2 144.4L142.9 143.9L142.1 143.4L143.3 143.3L144.2 143.2L144.6 142.6L145.3 142.4L145.8 142.4ZM153.4 141.4L154.9 141.5L154.3 142.1L153.3 141.9L153.4 141.4ZM152.0 141.3L153.1 141.4L153.0 142.0L152.2 141.9L152.0 141.3ZM141.0 133.2L141.6 133.3L141.6 134.6L140.9 134.5L141.0 133.2ZM140.1 139.1L140.8 139.1L140.8 140.2L140.1 140.2L140.1 139.1ZM212.9 30.8L215.4 32.1L217.1 32.7L218.8 32.1L221.3 31.2L219.7 30.8L218.4 30.0L215.4 30.1L212.9 30.8ZM219.2 29.8L221.3 30.4L225.6 30.3L226.4 29.8L223.0 29.6L219.2 29.8ZM221.3 32.1L223.4 32.1L223.9 31.5L221.8 31.4ZM247.1 37.2L248.3 37.8L250.9 37.9L252.1 37.9L250.4 36.8L250.9 35.7L249.2 35.6L248.8 36.5L247.1 37.2ZM249.2 35.4L251.3 35.6L252.5 34.8L255.1 33.8L258.5 33.2L261.4 32.9L261.0 32.5L256.8 33.0L253.0 33.5L250.4 34.1L249.2 35.4ZM243.3 29.7L247.5 29.8L251.7 29.6L255.1 29.1L252.5 28.5L247.5 29.1L243.3 29.4ZM284.6 30.8L288.0 31.5L291.3 31.2L292.2 30.6L288.8 30.1L284.6 30.8ZM280.4 29.9L283.8 30.0L286.3 29.6L284.6 29.0L281.2 29.3ZM319.2 34.0L321.7 34.4L325.1 34.2L326.8 33.8L324.2 33.4L320.4 33.4ZM327.2 34.1L329.3 34.4L330.6 34.0L328.9 33.8ZM321.7 35.5L324.7 35.7L324.2 35.1L322.1 35.1ZM305.1 83.8L304.8 85.1L305.3 85.7L306.1 86.2L307.0 86.0L308.0 86.9L308.3 86.5L307.4 85.8L306.3 85.3L306.7 84.0L306.7 82.3L305.7 82.0L305.3 82.5L305.1 83.8ZM306.5 91.7L307.5 91.4L308.4 91.6L309.3 92.9L310.1 92.3L310.3 91.4L310.1 90.2L309.5 89.5L308.8 90.6L307.8 90.5L307.0 91.0L306.5 91.7ZM308.5 87.2L309.3 87.2L309.6 88.3L309.1 89.2L308.6 88.6L308.5 87.2ZM306.5 88.9L306.5 87.8L307.5 88.1L307.7 88.9L307.5 90.1L307.0 89.7L306.5 88.9ZM302.5 90.6L303.6 89.9L304.4 88.9L304.3 88.2L303.4 89.3L302.5 90.6ZM305.2 86.4L305.9 86.4L306.1 87.3L305.7 87.4L305.2 86.4ZM300.3 104.8L301.2 104.8L302.1 105.0L301.7 105.3L300.6 105.3ZM302.1 105.0L303.2 104.8L304.0 104.9L303.6 105.3L302.3 105.4ZM304.7 104.9L305.7 104.9L307.3 104.8L307.2 105.2L305.7 105.3L304.8 105.3ZM304.0 105.9L305.1 105.9L305.4 106.4L304.4 106.2ZM307.8 106.5L308.6 105.7L309.7 105.0L310.9 104.9L310.3 105.4L309.1 106.0L308.2 106.5L307.8 106.5ZM304.4 98.5L304.7 97.2L305.5 96.7L307.4 97.0L309.1 96.4L308.6 97.4L307.4 97.5L305.7 97.5L305.0 98.6L306.1 98.6L307.6 98.6L306.5 99.3L306.1 99.5L307.0 100.6L307.4 101.4L307.0 102.0L306.3 101.9L305.7 100.2L305.3 100.3L305.2 102.5L304.4 102.5L304.4 100.8L304.0 100.3L304.2 99.5L304.4 98.5ZM311.2 97.0L311.6 96.1L312.2 96.6L311.6 97.4L312.0 98.2L311.3 98.1L311.2 97.0ZM311.6 100.4L312.9 100.2L314.0 100.5L313.3 100.9L311.8 100.8ZM309.9 100.5L310.7 100.5L310.7 101.0L310.1 100.9ZM328.7 102.6L329.7 102.5L331.0 102.0L332.0 101.4L332.1 102.0L331.0 102.9L329.7 103.1L328.7 102.6ZM330.8 100.1L331.8 100.6L332.7 101.7L332.4 101.7L331.4 100.7ZM288.0 31.7L292.2 31.4L291.3 30.8L288.0 31.0ZM122.2 34.2L124.3 34.5L124.8 34.0L123.5 33.7L122.2 33.9ZM107.5 32.1L110.0 32.3L110.8 31.7L108.3 31.5ZM108.3 31.2L110.4 31.4L110.8 31.0L109.2 30.8ZM121.0 31.7L123.1 31.8L123.5 31.4L121.8 31.2ZM118.4 32.1L120.1 32.2L119.7 31.7L118.4 31.8ZM115.1 33.1L116.3 33.4L116.7 32.9L115.5 32.8ZM102.8 33.7L104.1 33.9L104.3 33.4L103.3 33.4ZM113.8 35.7L115.1 36.0L115.2 35.4L114.2 35.3ZM139.9 40.6L141.2 40.5L140.8 40.2L139.9 40.2ZM148.4 45.7L149.1 45.7L148.8 45.4ZM146.0 46.7L146.5 46.7L146.3 46.3ZM136.0 45.4L136.7 45.5L136.4 45.0ZM137.6 44.3L138.3 44.3L138.0 44.0ZM136.1 51.5L136.8 51.3L136.5 51.5ZM59.6 53.2L60.5 53.0L60.2 53.3ZM58.0 53.5L58.7 53.3L58.5 53.6ZM55.8 53.6L56.9 53.5L56.7 53.8ZM54.3 53.9L55.0 53.7L54.8 54.1ZM53.2 54.0L53.8 53.8L53.7 54.1ZM52.0 54.2L52.8 54.1L52.6 54.4ZM354.3 54.2L355.1 54.1L354.9 54.4ZM353.1 53.8L353.6 53.6L353.4 53.9ZM349.1 53.0L350.0 52.9L349.7 53.1ZM151.8 150.9L153.4 150.4L154.7 150.3L153.9 150.6L152.2 151.0ZM156.8 149.6L157.4 149.6L157.1 149.8ZM156.0 151.3L157.1 151.4L156.6 151.6ZM154.3 152.1L155.4 152.2L154.9 152.5ZM149.4 152.4L150.5 152.5L150.0 152.8ZM145.4 154.6L146.3 154.8L145.8 155.3Z" fill="#00ff00" stroke="#000" stroke-width="1.1"/>
<path d="M208.0 47.5L207.8 46.4L207.9 45.4L209.1 44.6L210.8 43.9L212.5 43.1L213.7 42.3L214.6 41.2L215.9 40.3L217.1 39.5L219.2 38.6L221.8 38.2L224.3 37.6L227.2 37.7L229.4 38.5M141.4 133.4L141.0 135.5L140.4 137.2L140.2 138.9L140.2 140.6L141.0 142.1L142.1 143.2L143.3 143.8L145.0 144.5L146.7 144.9M98.6 55.8L96.3 54.4L94.6 52.6L93.3 51.2L91.9 50.1L90.6 49.1L88.9 48.4M185.9 38.2L182.5 37.8L184.6 36.6L183.0 35.9L185.9 35.1L185.1 33.8L186.8 32.9L185.9 31.7L187.2 30.4M175.8 40.3L172.0 41.8L169.0 43.1L168.2 44.6L166.9 46.3M165.2 46.5L161.9 45.2L159.9 43.4L158.9 41.4L159.8 39.5L158.9 38.0L157.2 36.8L156.0 35.2L153.9 33.6M151.3 41.6L149.2 40.6L146.7 39.3L145.0 37.9L142.1 37.0L138.7 36.1M199.2 50.5L198.6 49.6L198.9 48.8L199.4 48.2M65.3 51.3L68.2 50.7L70.8 49.6L72.9 48.6L74.4 47.4M75.4 47.5L77.9 46.9L80.5 46.3L82.2 46.8M215.9 59.6L216.7 60.6L218.0 61.3L219.1 61.9M223.9 65.9L225.0 66.3L225.7 65.8L226.4 66.5M223.4 64.7L224.5 64.0L225.2 63.6M276.2 35.1L277.9 34.0L282.1 33.4L286.3 33.1L289.7 32.4L292.2 32.0M267.7 36.5L269.4 36.3L271.1 35.7L272.8 35.2M286.4 86.4L286.5 87.6L286.5 88.9M147.5 154.6L146.0 155.7" fill="none" stroke="#000" stroke-width="1.25" stroke-linecap="round"/>
<path d="M227.2 63.0L227.2 62.2L227.0 61.6L227.2 61.1L227.7 60.5L228.6 59.5L229.5 58.4L230.6 58.5L231.9 58.8L231.1 59.3L231.9 60.0L232.3 60.2L233.6 59.6L234.4 59.3L233.1 58.8L233.3 58.5L234.8 58.0L236.7 57.8L235.7 58.4L235.3 59.2L234.8 59.5L235.7 60.1L237.1 60.9L238.6 61.8L238.7 62.5L237.4 63.0L235.7 63.0L234.4 62.8L233.1 62.2L231.5 62.2L230.2 62.8L228.5 62.9L227.2 63.0ZM245.0 58.4L243.3 59.2L243.7 60.1L243.7 61.3L244.5 62.2L245.4 63.3L245.0 64.5L245.0 65.6L245.8 66.1L247.5 66.7L249.2 66.5L249.2 64.7L248.3 63.9L248.3 63.0L248.3 62.2L247.9 61.5L246.6 60.1L246.9 59.4L248.3 58.4L247.9 58.0L245.8 58.1L245.0 58.4Z" fill="#c8c8c8" stroke="#000" stroke-width="0.9"/>
<path d="M99.9 56.3L110.8 56.3L123.3 56.3L123.7 56.4L125.2 56.6L126.9 57.0L128.1 57.1L129.1 56.9L131.1 57.5L132.1 58.1L133.2 58.8L134.0 59.4L134.1 61.3L133.6 62.2L135.3 61.9L137.0 61.5L137.0 61.0L137.8 60.8L139.1 60.5L140.4 59.6L143.3 59.6L144.2 59.0L144.6 58.2L145.3 57.6L146.3 57.7L146.4 58.9L146.9 59.6M84.7 38.8L84.7 46.7L86.2 46.9L87.6 47.8L88.9 47.4L89.8 47.4L91.0 48.3L92.3 49.5L94.0 50.3L93.8 51.2M104.9 70.2L106.9 70.1L110.0 71.3L112.4 71.3L112.4 70.8L113.8 70.8L115.5 72.6L116.7 73.2L118.0 72.5L119.7 74.5L121.6 75.8M125.9 85.4L126.0 85.0L126.3 84.2L127.3 84.2L126.9 83.2L126.9 82.7L128.4 82.7L128.5 82.6L129.1 82.2M128.4 82.7L128.4 84.3L128.6 84.3M128.4 84.3L128.4 85.6L127.6 86.1M128.4 85.6L129.0 86.0L129.6 86.4M130.0 86.8L130.7 86.1L131.5 85.5L132.4 85.3L133.4 85.1M131.3 88.4L132.2 88.5L133.0 88.6M133.7 90.9L133.8 90.2L134.0 89.7M143.1 81.1L143.1 81.9L143.1 82.6M143.5 87.8L142.5 88.5L142.1 89.7L142.6 90.7L142.7 91.5L144.2 91.9L145.0 92.6L146.7 92.5L146.4 94.0L146.9 94.9L146.4 95.4L147.1 96.8M147.1 96.8L146.3 96.3L144.8 96.4L145.0 97.2L144.6 97.8L145.1 98.8L144.7 101.4M144.7 101.4L144.0 101.0L144.6 100.1L142.9 99.8L141.6 98.9L140.1 97.9L139.3 97.5L138.3 97.5L137.2 96.6M140.1 97.9L139.9 99.1L139.0 100.0L137.7 100.7L137.2 101.7L136.6 102.0L135.9 100.7M153.0 90.6L151.9 91.7L152.0 92.7L152.4 93.4M147.1 96.8L147.7 97.1L148.4 97.1L149.6 96.1L149.6 95.7L150.1 95.9L149.3 94.6L149.1 94.2L150.7 94.4L151.3 94.2L152.4 93.4L153.0 93.5L153.0 94.0M153.0 94.0L153.2 94.8L153.1 95.9L153.9 96.7L154.5 96.5L155.5 96.1L156.0 96.2M155.4 92.7L155.3 93.4L154.7 94.4L155.3 94.9L156.0 96.2M156.0 96.2L156.5 95.9L157.6 95.9L158.1 94.8L157.7 93.8L158.1 92.9M157.6 95.9L159.0 95.9L160.0 94.3M144.7 101.4L142.1 102.2L141.3 104.0L142.1 105.6L142.7 106.3L144.1 105.9L144.1 107.1L144.9 107.0M144.9 107.0L146.0 107.1L148.5 106.1L148.5 107.7L150.5 108.5L152.6 109.4L152.8 111.5L154.4 111.6L154.5 112.5L155.1 113.2L154.7 114.6L154.5 114.9M144.9 107.0L145.4 108.4L145.4 110.1L145.1 111.0L144.9 112.5L145.0 112.6M145.0 112.6L144.2 113.3M145.0 112.6L145.6 114.2L146.1 116.0L146.9 117.1M146.9 117.1L147.8 116.3L149.4 117.1L150.7 116.6M150.7 116.6L151.3 115.2L153.8 114.2L154.5 114.9M154.5 114.9L154.8 116.5L156.6 116.8L156.9 118.1L157.8 118.1L157.6 119.5M150.7 116.6L152.2 118.0L154.0 118.8L155.0 119.4L154.2 120.9L156.0 121.1L156.6 120.9L157.6 119.5M157.6 119.5L158.2 120.8L156.6 121.9L155.0 123.4M155.0 123.4L156.6 124.0L158.2 125.0L158.6 126.4M155.0 123.4L154.5 125.4L154.4 126.6M146.9 117.1L146.0 118.6L145.8 120.7L144.8 122.4L144.3 124.5L144.7 126.0L144.2 128.3L143.7 130.4L143.1 132.6L143.1 134.7L143.3 136.8L142.6 138.9L141.8 140.6L142.6 141.7L144.6 141.9L145.9 142.2M145.8 142.5L145.8 144.3M196.2 62.2L196.7 62.1L198.1 62.3L198.3 62.6L197.8 63.0L197.7 64.1L197.3 64.3L197.7 65.4L197.3 66.3M202.1 61.1L203.2 61.5L204.9 61.8L206.3 61.9M210.0 60.7L209.5 59.9L209.5 58.9M209.5 58.9L208.7 58.6L208.9 58.3L209.5 57.5L210.0 57.4M210.0 57.4L210.5 56.3L209.0 55.8M209.0 55.8L208.5 55.8L207.7 55.4L207.1 55.4L205.7 54.5M206.5 54.2L207.4 54.2L208.5 54.4L208.7 54.7M208.7 54.7L208.9 55.2L209.0 55.8M208.7 54.7L208.7 53.9L209.4 53.7L209.5 52.6M210.9 51.3L211.9 51.3M215.7 52.1L215.6 53.0L216.0 53.7L216.3 54.6M216.3 54.6L214.6 55.0L213.9 55.2L215.3 56.5M215.3 56.5L214.6 56.9L214.6 57.5L212.5 57.5L211.7 57.5M211.7 57.5L210.8 57.4L210.0 57.4M209.5 58.9L210.8 58.6L211.2 58.9L212.4 58.3M211.7 57.5L211.6 57.9L212.4 58.3M212.4 58.3L213.9 58.0L215.2 58.4M215.2 58.4L215.1 59.1M215.2 58.4L217.1 58.2M217.1 58.2L217.5 57.5L218.0 57.1M215.3 56.5L216.3 56.3L217.9 56.6L218.0 57.1M216.3 54.6L217.5 55.2L219.5 55.8M218.0 57.1L218.0 56.4L219.5 55.8M219.5 55.8L220.5 56.1L222.6 56.2M218.0 57.1L219.5 57.3L220.5 56.9L222.3 56.8M222.6 56.2L222.8 55.8L223.9 55.0L223.5 54.1L223.4 53.3L223.8 52.9L223.4 52.0L222.9 51.7M222.9 51.7L220.2 51.6M222.9 51.7L222.9 51.2L221.5 50.9M223.4 52.0L225.1 51.9L226.1 50.9L226.1 50.6M221.3 50.2L223.9 50.1L226.1 50.6M226.1 50.6L227.4 50.2L227.0 49.1M224.1 48.7L225.6 48.8L226.7 49.0M226.7 49.0L227.0 48.6L226.8 48.0L227.2 47.4M227.4 50.2L229.7 50.7L229.8 51.4L231.2 52.5L230.2 52.8L230.4 53.6M223.5 54.1L225.1 53.8L227.2 54.1L229.4 54.2L230.4 53.6M230.4 53.6L232.3 53.5L233.6 54.6L234.0 55.2L235.7 55.5L237.4 55.8L237.2 56.4L237.2 57.3L235.9 57.8M222.6 56.2L222.3 56.8L222.9 57.1M222.9 57.1L224.3 57.2L226.1 56.9M226.1 56.9L227.2 56.9L228.3 57.5L228.9 58.5L227.4 59.2M226.1 56.9L226.8 57.7L227.4 58.4L227.4 59.2L228.6 59.5M222.9 57.1L221.8 58.1L220.7 58.7M220.7 58.7L219.5 58.9L218.0 58.9L217.4 58.4L217.1 58.2M220.7 58.7L221.7 59.8L222.6 60.1L222.8 60.3M222.8 60.3L223.9 60.8L225.6 60.6L226.8 60.4L227.7 60.8M222.8 60.3L222.5 61.3L222.5 61.9M222.5 61.9L223.0 62.8L224.3 62.6L225.6 62.8L225.9 62.4L227.2 62.2M225.9 62.8L225.6 63.2M220.5 64.1L221.2 63.2L221.3 63.1L222.5 62.9L223.0 62.8M220.0 62.3L220.5 61.8L221.0 62.3L221.2 63.2M221.0 62.3L222.5 61.9M217.0 59.5L217.4 59.6L218.0 59.5L219.7 59.7L219.8 60.1M219.8 59.7L220.0 60.5L219.7 60.9L219.2 61.8M217.0 59.5L217.1 60.3L218.5 61.3M219.7 60.9L220.7 61.5L220.5 61.8M219.5 58.9L219.8 59.7M215.1 59.2L216.5 59.2L217.4 58.4M213.1 47.8L213.7 46.8L214.2 45.7L213.9 44.4L215.4 43.4L215.9 41.8L217.5 40.6L218.8 39.7L220.7 39.3M220.7 39.3L223.4 40.2L223.7 41.8L223.9 42.0M220.7 39.3L223.0 39.6L225.1 39.4L225.6 38.5L227.2 38.4L228.1 39.2M228.1 39.2L229.7 38.6M228.1 39.2L227.7 40.0L228.9 40.6L228.3 41.2L228.9 42.1L228.7 42.9L229.4 43.4L230.2 44.5L228.9 45.4L227.1 46.5M197.5 51.2L196.9 51.6L197.7 51.9L198.4 51.9M237.4 61.0L239.5 61.2L240.7 61.7L242.8 62.4L244.0 62.9L244.6 62.4M238.7 62.5L239.7 62.6L240.3 63.0L241.6 62.8L242.8 63.0L242.8 62.4M240.3 63.0L240.5 63.8L241.4 64.1L240.8 64.4L241.1 65.3L241.4 66.3M241.6 62.8L242.0 63.4L242.4 64.1L242.8 64.8M241.4 64.1L242.8 64.8L244.1 64.2L244.9 65.2M234.0 67.4L234.6 66.6L235.7 66.6L237.4 66.6L239.4 66.3M239.4 66.3L241.4 66.3M241.4 66.3L242.4 67.4L242.0 68.6L242.4 69.8L243.9 70.8L244.1 71.9L244.5 72.4M239.4 66.3L238.4 67.3L238.2 68.6L236.4 69.5M236.4 69.5L234.7 70.4L233.7 70.1M233.2 69.7L233.8 69.6L234.5 68.8L234.0 68.5M233.7 70.1L233.6 71.1L233.1 72.8M232.6 71.3L233.1 72.8M236.4 69.5L236.7 70.5M236.7 70.5L234.8 71.1L235.7 71.9L235.3 72.4L234.1 73.0L233.1 72.9M236.7 70.5L237.7 70.8L239.1 71.4L241.3 73.0L242.8 73.1M242.8 73.1L243.9 72.3L244.1 72.4M242.8 73.1L243.7 73.5L244.4 73.6M246.5 76.8L246.8 76.9M247.1 77.3L248.0 78.4L250.2 78.6L250.6 79.1L250.0 80.8L247.5 81.7L245.0 82.0L243.7 83.3L242.7 83.2L241.7 83.0L240.2 83.0L240.0 83.6L239.7 83.9M250.2 78.6L250.7 77.3L250.9 76.9L251.2 76.7M247.5 81.7L248.4 83.6M249.1 66.2L250.9 65.5L252.0 65.6L253.6 66.0L255.2 66.8M255.2 66.8L254.7 68.7L255.0 71.1L255.8 71.5L255.0 72.5M255.0 72.5L256.6 73.9L256.9 74.7L255.6 76.4M255.0 72.5L257.6 72.9L259.5 72.5L259.9 71.3L262.1 70.8L262.2 69.7L262.7 69.0L263.7 68.6L264.0 67.3L266.0 66.5L266.8 66.3M255.2 67.6L256.8 67.8L258.0 67.0L259.7 66.1L261.0 66.4L262.2 65.9L263.1 65.4L263.9 66.4L264.0 66.7L265.5 66.1L266.8 66.3M247.9 62.4L249.2 61.9L250.4 62.8L250.9 62.8M250.9 62.8L251.7 62.8L253.0 61.6L254.2 62.0L254.2 62.8L255.8 63.0L256.3 63.9L257.9 64.8L259.7 66.1M250.9 62.8L250.9 59.6L253.0 59.1L255.1 60.2L255.9 60.9L258.4 60.8L259.4 61.3L259.3 62.2L261.0 63.0L263.1 62.2L263.5 61.9M263.5 61.9L265.6 61.8L266.2 61.2L267.7 61.3L270.3 61.5L271.3 62.0M271.3 62.0L269.8 62.8L268.4 63.2L265.9 64.1M263.5 61.9L262.7 62.8L264.2 62.6L265.2 63.2L264.2 63.8L263.2 63.9L262.1 63.2L261.8 63.7L263.1 64.2L265.9 64.3M261.8 63.7L261.4 64.3L260.6 64.3L261.2 65.4L260.8 66.3M265.9 64.3L266.8 66.3M245.1 58.5L244.5 58.3L243.3 57.2L242.9 56.7L243.7 55.1L244.7 55.5L246.6 54.1L249.6 54.6L250.9 54.7L253.0 54.6L255.5 54.7L254.2 53.7L255.1 52.1L258.5 51.7L261.8 50.9L263.5 51.9L265.6 52.0L268.4 51.7L269.3 52.6L271.1 54.7L274.1 54.6L275.6 55.8L277.3 56.1M277.3 56.1L275.9 56.8L276.0 57.9L273.6 57.8L273.2 59.2L271.1 59.6L271.8 61.2L271.3 62.0M277.3 56.1L281.2 54.7L285.9 55.6L286.5 53.7L289.8 54.3L289.9 54.9L293.6 55.2L296.4 56.1L298.9 55.8L302.1 55.6M277.7 56.1L278.3 56.8L280.3 58.5L280.4 59.5L284.1 60.2L284.9 61.6L288.8 61.7L292.2 62.5L296.7 61.6L298.1 60.8L298.0 59.6L299.8 59.6L301.2 59.2L302.0 58.5L304.8 58.2L302.6 57.4L301.1 57.2L302.1 55.6M302.1 55.6L304.2 55.3L305.5 53.2L307.9 52.4L309.6 52.8L311.2 55.2L314.0 57.4L317.2 56.8L315.9 59.6L314.4 60.9L313.8 61.9M313.8 61.9L311.6 62.2L310.7 62.4L308.6 63.9M310.5 65.8L311.9 65.1M294.7 79.5L293.6 78.4L292.5 78.0L291.2 78.6L289.7 78.8M289.7 78.8L289.0 79.8L288.1 79.6L287.3 79.1L287.0 78.1L285.9 77.5L286.9 75.9L286.9 74.5L285.7 73.9M285.7 73.9L283.8 73.0L281.2 74.2L278.5 74.1L277.9 74.1M277.9 74.1L276.2 74.1L274.5 73.3L272.8 72.2L271.9 72.2M277.9 74.1L277.9 75.4L276.0 75.2L273.9 74.6L271.2 73.4L271.9 72.2M278.5 74.1L278.7 75.1L281.2 75.1L281.2 74.2M271.9 72.2L270.3 71.3L270.0 70.2L270.7 69.8L270.1 68.6L269.2 67.7L267.7 67.4L266.8 66.3M269.2 67.7L266.0 68.4L266.5 70.0L267.1 70.4L266.5 71.5L265.2 72.5L264.3 74.1L262.8 74.1L262.7 76.0L263.5 77.1L261.7 77.2L261.1 77.7M278.7 79.3L278.5 77.2L277.9 76.9L278.3 75.4L279.4 75.8L279.4 76.4L281.4 76.5L280.5 77.5L280.8 78.3L281.5 77.7L281.5 79.6L281.5 80.2M281.5 79.6L282.3 78.7L282.3 77.5L283.5 76.2L283.9 75.1L285.7 73.9M286.8 89.3L287.3 87.8L287.1 86.1L286.5 84.9L286.9 83.8L285.9 82.3L286.3 81.1L288.1 80.5M288.1 80.5L289.0 79.8M288.1 80.5L288.4 81.3L289.0 81.3L289.0 83.0L289.7 82.4L291.3 82.3L292.0 83.0L292.0 83.8L292.7 84.5L292.6 85.6M289.7 78.8L290.5 80.0L291.8 80.4L291.3 81.2L292.4 82.1L293.5 83.4L294.3 84.2L294.3 85.1L294.3 85.4M292.6 85.6L290.5 85.7L290.0 86.4L290.4 87.9M294.3 85.4L294.3 87.2L293.0 87.9L292.9 88.5L291.7 89.0M292.6 85.6L294.3 85.4M288.1 92.3L288.9 93.0L289.7 92.5M296.1 96.1L296.8 97.0L298.1 96.6L299.6 96.6L300.6 95.7L301.3 94.2L302.8 94.2M299.8 93.9L300.5 94.4L300.9 93.6M322.6 100.0L322.6 105.5M309.0 105.5L309.1 105.9M192.5 74.3L196.3 74.3M201.8 68.0L202.2 69.4L202.6 70.4L200.7 70.9L199.4 72.4L196.3 73.5L196.3 74.7M196.3 74.7L196.3 75.8L193.5 75.8L193.5 78.0L192.7 78.3L192.7 79.7L189.3 79.7M196.3 74.7L199.5 76.6L198.2 76.6L198.6 80.3L199.0 84.0L199.0 84.7L195.6 84.7L193.9 84.7L193.3 85.4M193.3 85.4L192.3 84.2L191.3 83.7L189.8 84.2M199.5 76.6L204.6 79.9L205.1 80.3L206.3 81.1L206.3 81.7L207.2 81.6M207.2 81.6L208.7 81.2L210.9 79.5L213.7 77.9M213.7 77.9L212.1 77.0L212.1 75.3L211.8 74.1L211.9 72.9L211.6 72.1M211.6 72.1L211.2 70.6L210.7 70.1L210.0 69.6L210.5 68.4L210.7 67.7L210.5 66.9L210.7 66.5M211.6 72.1L212.3 71.6L212.1 71.2L213.2 70.3L213.3 69.7M224.7 71.0L224.7 79.1M224.7 79.1L224.7 80.8L223.9 80.8L223.9 81.3L217.1 77.9L216.3 78.3L215.5 78.7L213.7 77.9M224.7 79.1L234.7 79.1M216.3 78.3L217.0 80.5L216.7 83.5L215.0 85.6M215.0 85.6L214.7 86.3L212.1 86.5L210.2 86.5L208.2 86.0L207.1 86.4L206.7 87.9M207.2 81.6L207.2 83.5L206.7 84.6L204.8 84.8L204.0 85.2M204.0 85.2L203.9 85.6L204.5 86.5L205.5 87.1L205.5 87.7L206.7 87.9M204.0 85.2L203.4 85.1L201.9 85.8L200.3 86.4L199.9 87.2L199.2 87.9L199.0 89.0M193.3 85.4L193.9 87.3L195.0 87.8L196.4 88.4L196.9 89.2M196.9 89.2L198.4 88.9L199.0 89.0M199.0 89.0L199.6 89.5L201.3 89.7L201.4 90.8L200.9 92.5L201.0 93.5M201.3 89.7L201.2 88.5L203.2 88.4L203.6 88.4L204.4 88.5L205.5 87.7M203.6 88.4L204.0 89.2L204.0 91.5L204.6 92.6M204.4 88.5L204.8 89.7L205.0 92.0L205.1 92.5M206.7 87.9L206.8 88.7L205.9 90.6L205.9 92.5M210.8 93.7L211.2 92.7L212.5 91.9L213.5 91.9L214.4 90.6L215.0 89.3L215.9 88.1L215.6 87.2L215.5 86.7L215.0 85.6M215.6 86.9L216.3 87.6L216.7 89.3L215.4 89.3L216.7 91.4M216.7 91.4L215.9 92.7L215.9 93.6L217.0 95.3L217.1 95.9M217.1 95.9L214.8 95.9L213.2 95.9L211.9 95.9M213.2 95.9L213.2 97.0L211.7 97.0M214.8 95.9L215.9 96.7L215.3 97.8L215.9 98.3L215.8 99.4L214.2 99.8L213.4 99.8L213.0 101.1M219.3 94.8L218.9 95.9L218.6 98.2L217.3 99.7L217.1 100.8L215.9 102.0L214.7 101.7L213.9 102.7M217.1 95.9L217.5 95.1L219.3 94.8M219.3 94.8L219.2 94.1L220.1 93.5L222.5 94.3L223.3 93.8L225.0 93.5L226.7 93.4M216.7 91.4L218.0 91.3L219.7 90.2L221.9 88.8L222.9 88.6M222.9 88.6L223.7 90.4L224.9 91.2L226.7 93.4M223.9 81.3L223.9 84.5L222.9 84.5L222.2 86.8L222.9 88.6M223.7 90.4L224.7 89.1L227.2 89.7L228.9 89.3L231.0 87.6L231.6 88.7L232.3 89.7M234.3 85.5L234.0 87.0L233.1 88.5L232.3 89.7M234.3 85.5L234.8 83.4L236.2 82.5M234.3 85.5L235.7 85.3L237.4 85.5L239.4 87.2M239.4 87.2L238.9 88.5L240.1 88.1M238.9 88.5L239.9 88.5L239.7 89.3L240.7 90.2L243.3 91.0L244.1 91.0L241.6 93.6L239.1 94.2L239.0 94.5M239.0 94.5L236.9 94.8L235.7 94.7L234.0 94.1L233.4 93.6L232.3 94.2M232.3 89.7L231.5 91.2L233.4 93.2M239.0 94.5L238.2 95.4L238.2 98.6L238.7 99.2M232.3 94.2L232.7 94.8L233.1 96.3L232.3 97.8L232.2 98.6M232.2 98.6L235.4 100.4L236.7 101.8M232.3 94.2L229.8 94.7L229.6 94.8L228.7 93.9L226.7 93.4M229.6 94.8L229.9 95.9L228.9 96.7L228.6 98.3L228.6 99.0M228.6 99.0L229.4 98.6L232.2 98.6M228.6 99.0L228.1 100.2L228.3 101.6M229.4 98.6L229.6 99.8L229.4 100.8L228.8 101.5L228.3 101.6L228.5 103.6L229.5 104.8M228.1 100.2L229.6 99.8M229.5 104.8L231.3 105.7L232.3 105.9L232.7 107.5L235.3 107.7L237.7 106.7M229.5 104.8L227.8 105.0L227.6 105.6L227.7 108.4L228.8 108.1L228.8 109.2L228.1 109.2L226.7 108.1L225.0 107.4L223.9 107.0L223.9 108.8L222.2 108.8M222.2 108.8L222.2 111.5L223.3 112.6M214.0 102.8L214.6 102.8L217.5 102.8L218.0 104.0L219.7 104.6L222.0 104.0L222.0 105.9L222.4 107.3L223.9 107.0M213.6 112.5L215.0 112.2L215.4 112.6L219.1 112.6L221.7 113.1L223.3 112.6L225.0 112.9M221.7 113.1L221.3 113.3L221.3 116.5L220.5 116.5L220.5 118.8L220.5 121.9M217.5 122.0L218.3 122.1L220.5 121.9M220.5 118.8L221.2 120.5L222.7 119.8L225.1 119.6L226.2 118.4L228.4 116.5M225.0 112.9L225.0 113.5L225.7 114.3L227.0 115.2L228.4 116.5M225.0 112.9L226.4 113.1L228.0 111.4L229.3 111.0M229.3 111.0L229.1 110.3L231.6 109.7L231.2 109.2L231.7 108.4L231.7 107.0L231.3 105.7M232.7 107.5L232.9 108.4L233.8 110.1L233.8 111.4L233.4 112.3L232.6 111.5L232.6 110.1L231.6 109.7M229.3 111.0L231.3 112.0L231.5 113.5L231.2 115.0L230.0 116.8M228.4 116.5L230.0 116.8M230.0 116.8L230.6 118.6L230.5 119.7L230.7 120.5L231.4 120.5M230.5 119.7L229.8 119.8L229.7 120.7L230.5 120.9L230.7 120.5M226.4 122.9L227.7 122.1L228.4 122.7L227.9 123.3L227.1 123.7L226.4 122.9M189.5 86.3L191.0 86.1L192.0 86.4L191.0 86.6L189.5 86.7M189.5 87.3L191.0 87.0L192.1 87.1L193.3 87.4L193.9 87.3M192.1 87.1L192.1 87.8L191.2 88.1L191.0 88.5M192.4 90.1L193.2 89.5L194.2 89.3L194.9 90.6M194.9 90.6L193.9 92.0M194.9 90.6L195.8 91.5L196.5 91.3L197.0 90.5L196.9 89.2M196.5 91.3L196.5 92.4L197.3 93.3L197.3 94.1M126.9 28.9L131.1 29.2L136.1 29.5L138.7 29.8M144.6 29.0L148.0 28.6L150.5 28.3M128.6 31.8L131.9 31.8L133.6 31.5M135.7 32.4L138.3 32.1M130.2 30.7L133.6 30.9L136.1 30.7M139.5 30.6L137.8 30.1L134.5 30.0M134.5 27.6L134.5 28.3L137.8 28.7M144.6 27.5L142.9 28.0L140.4 28.3M124.3 29.8L126.9 30.2L127.7 30.7M126.9 34.2L127.3 33.5M132.8 33.6L133.6 34.0M146.3 41.6L148.0 41.1L149.2 41.6M148.0 44.4L146.3 43.8L144.6 43.5M142.9 38.9L144.6 38.6L146.3 38.3M131.1 37.6L132.4 36.8L131.5 35.9M135.3 37.6L137.4 38.2L139.5 37.9M149.2 42.3L147.1 41.8L146.3 42.5M104.9 37.3L108.3 36.8L110.0 36.4M112.5 39.4L113.0 38.5L112.1 37.6M107.5 38.2L109.6 38.2M108.7 33.1L110.0 33.9L111.7 34.0M103.3 36.3L104.5 35.7M180.0 38.0L182.1 37.4L184.2 37.8M160.2 39.0L161.0 39.5L160.6 38.5" fill="none" stroke="#000" stroke-width="0.78"/>
<path d="M254.2 72.4L262.7 97.8L313.3 82.5L304.8 57.1Z" fill="rgba(150,230,230,0.9)" stroke="#f2161e" stroke-width="1.6"/>
<path d="M270.7 67.3L271.8 70.6L275.2 70.6L272.5 72.7L273.5 76.0L270.7 74.0L267.9 76.0L268.9 72.7L266.1 70.6L269.6 70.6Z" fill="#f41414" stroke="#2a0808" stroke-width="0.8"/>
</g></g>
<rect x="51.8" y="21.5" width="303.7" height="152.6" fill="none" stroke="#3a3a3a" stroke-width="0.75"/>
<path d="M102.4 21.5v4M102.4 174.1v-4M153.0 21.5v4M153.0 174.1v-4M203.6 21.5v4M203.6 174.1v-4M254.2 21.5v4M254.2 174.1v-4M304.8 21.5v4M304.8 174.1v-4M51.8 46.9h4M355.5 46.9h-4M51.8 72.4h4M355.5 72.4h-4M51.8 97.8h4M355.5 97.8h-4M51.8 123.2h4M355.5 123.2h-4M51.8 148.7h4M355.5 148.7h-4" stroke="#2a2a2a" stroke-width="0.8" fill="none"/>
<g font-family="Liberation Sans, sans-serif" font-size="7.5" fill="#141414" stroke="#141414" stroke-width="0.18">
<text x="48.2" y="22.9" text-anchor="end">90°N</text>
<text x="48.2" y="48.3" text-anchor="end">60°N</text>
<text x="48.2" y="73.8" text-anchor="end">30°N</text>
<text x="48.2" y="99.2" text-anchor="end">0°</text>
<text x="48.2" y="124.6" text-anchor="end">30°S</text>
<text x="48.2" y="150.1" text-anchor="end">60°S</text>
<text x="48.2" y="175.5" text-anchor="end">90°S</text>
<text x="51.8" y="182.0" text-anchor="middle">180°</text>
<text x="102.4" y="182.0" text-anchor="middle">120°W</text>
<text x="153.0" y="182.0" text-anchor="middle">60°W</text>
<text x="203.6" y="182.0" text-anchor="middle">0°</text>
<text x="254.2" y="182.0" text-anchor="middle">60°E</text>
<text x="304.8" y="182.0" text-anchor="middle">120°E</text>
<text x="355.5" y="182.0" text-anchor="middle">180°</text>
</g>
<text x="203.2" y="15.1" text-anchor="middle" font-family="Liberation Sans, sans-serif" font-weight="bold" font-size="9.12" fill="#111">Point in polygon: True</text>
</svg>
</div></body></html>
